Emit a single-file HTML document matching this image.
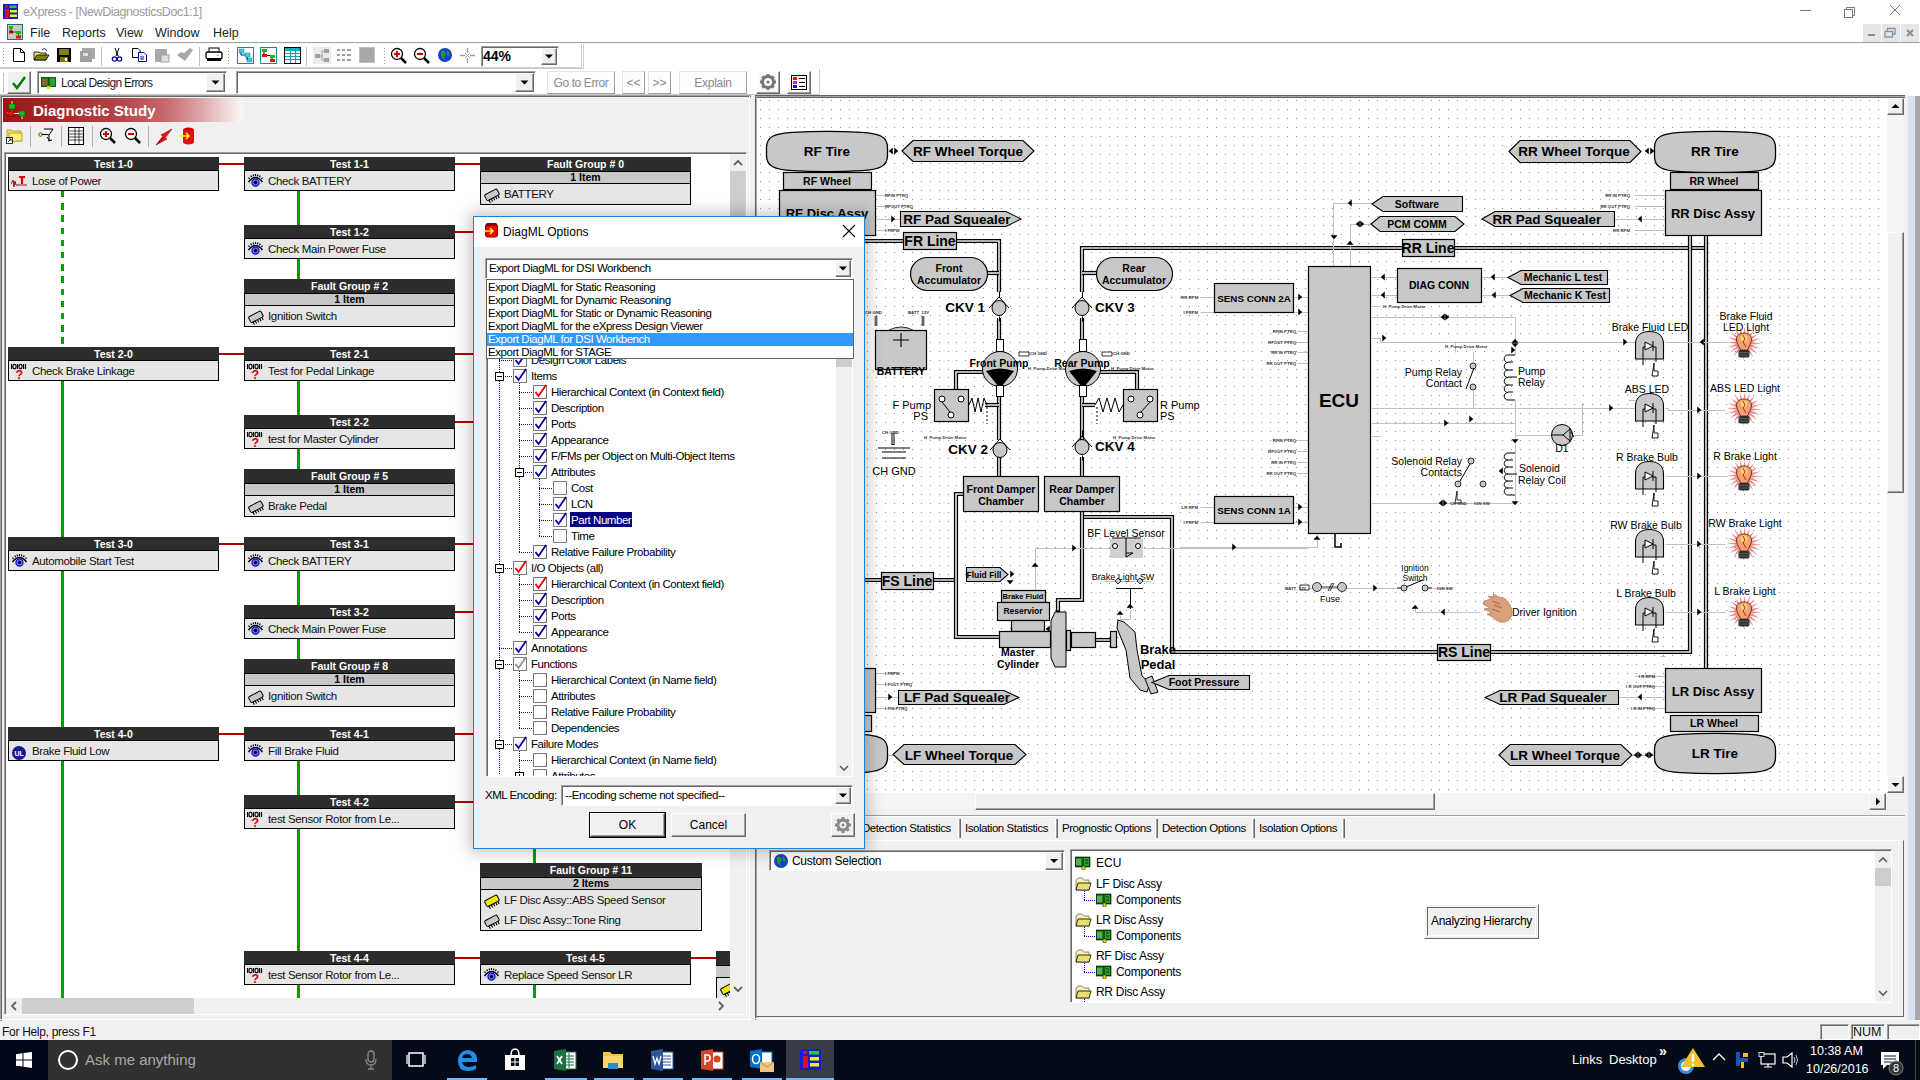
<!DOCTYPE html>
<html><head><meta charset="utf-8"><style>
html,body{margin:0;padding:0;width:1920px;height:1080px;overflow:hidden;background:#f0f0f0;font-family:"Liberation Sans", sans-serif;}
.t{position:absolute;white-space:nowrap;line-height:1;font-family:"Liberation Sans", sans-serif;}
svg text{font-family:"Liberation Sans", sans-serif;}
</style></head><body>
<div style="position:absolute;left:0px;top:0px;width:1920px;height:96px;background:#fff;"></div><svg style="position:absolute;left:3px;top:4px;" width="15" height="15" viewBox="0 0 15 15"><rect x="0" y="0" width="15" height="15" fill="#1a1ad0"/><rect x="2" y="1.5" width="3" height="2" fill="#e01010"/><rect x="6.5" y="1.5" width="7" height="2.5" fill="#20d020"/><rect x="2" y="5" width="4" height="9" fill="#e01010"/><rect x="7" y="6" width="7" height="2.5" fill="#f0f020"/><rect x="7" y="10.5" width="7" height="2.5" fill="#f0f020"/></svg><div class="t" style="left:23px;top:6px;font-size:12.5px;color:#9a9a9a;font-weight:normal;letter-spacing:-0.45px">eXpress - [NewDiagnosticsDoc1:1]</div><svg style="position:absolute;left:1790px;top:0px;" width="130" height="24" viewBox="0 0 130 24"><line x1="10" y1="10.5" x2="21" y2="10.5" stroke="#777"/><rect x="54.5" y="9.5" width="8" height="8" fill="none" stroke="#777"/><path d="M56.5 9.5 V7.5 H64.5 V15.5 H62.5" fill="none" stroke="#777"/><path d="M100 5 L110 15 M110 5 L100 15" stroke="#777"/></svg><svg style="position:absolute;left:7px;top:24px;" width="16" height="16" viewBox="0 0 16 16"><rect x="0.5" y="0.5" width="15" height="15" fill="#c8c8c8" stroke="#1a7070"/><rect x="2" y="2" width="4" height="3" fill="#10c010"/><rect x="2" y="6.5" width="4" height="3" fill="#e01010"/><rect x="9" y="7" width="5" height="3" fill="#10c010"/><rect x="9" y="11.5" width="5" height="3" fill="#e01010"/><path d="M4 5 V8 H9 M11.5 10 V11.5" stroke="#000" stroke-width="0.7" fill="none"/></svg><div class="t" style="left:30px;top:27px;font-size:12.5px;color:#222;font-weight:normal;">File</div><div class="t" style="left:62px;top:27px;font-size:12.5px;color:#222;font-weight:normal;">Reports</div><div class="t" style="left:116px;top:27px;font-size:12.5px;color:#222;font-weight:normal;">View</div><div class="t" style="left:155px;top:27px;font-size:12.5px;color:#222;font-weight:normal;">Window</div><div class="t" style="left:213px;top:27px;font-size:12.5px;color:#222;font-weight:normal;">Help</div><div style="position:absolute;left:1863px;top:24px;width:18px;height:18px;background:#e6e6e6;"></div><div style="position:absolute;left:1882px;top:24px;width:18px;height:18px;background:#e6e6e6;"></div><div style="position:absolute;left:1901px;top:24px;width:18px;height:18px;background:#e6e6e6;"></div><svg style="position:absolute;left:1863px;top:24px;" width="57" height="18" viewBox="0 0 57 18"><rect x="5" y="10" width="7" height="2" fill="#7f93a8"/><rect x="22" y="7.5" width="7.5" height="5.5" fill="none" stroke="#7f93a8" stroke-width="1.3"/><path d="M24.5 7 V4.5 H32 V10 H30" fill="none" stroke="#7f93a8" stroke-width="1.3"/><path d="M44 6 L50 12 M50 6 L44 12" stroke="#7f93a8" stroke-width="2"/></svg><div style="position:absolute;left:0px;top:42px;width:1920px;height:2px;background:#a0a0a0;border-bottom:0"></div><div style="position:absolute;left:0px;top:43px;width:1920px;height:1px;background:#f8f8f8;"></div><div style="position:absolute;left:0px;top:67px;width:582px;height:1px;background:#d0d0d0;"></div><div style="position:absolute;left:581px;top:44px;width:1px;height:24px;background:#d0d0d0;"></div><div style="position:absolute;left:0px;top:94px;width:820px;height:1px;background:#c8c8c8;"></div><div style="position:absolute;left:819px;top:69px;width:1px;height:26px;background:#d0d0d0;"></div><div style="position:absolute;left:0px;top:68px;width:584px;height:1px;background:#c8c8c8;"></div><div style="position:absolute;left:583px;top:44px;width:1px;height:25px;background:#d0d0d0;"></div><div style="position:absolute;left:3px;top:48px;width:1px;height:1px;background:#a0a0a0;"></div><div style="position:absolute;left:3px;top:51px;width:1px;height:1px;background:#a0a0a0;"></div><div style="position:absolute;left:3px;top:54px;width:1px;height:1px;background:#a0a0a0;"></div><div style="position:absolute;left:3px;top:57px;width:1px;height:1px;background:#a0a0a0;"></div><div style="position:absolute;left:3px;top:60px;width:1px;height:1px;background:#a0a0a0;"></div><div style="position:absolute;left:3px;top:63px;width:1px;height:1px;background:#a0a0a0;"></div><div style="position:absolute;left:3px;top:73px;width:1px;height:20px;background:#c0c0c0;"></div><svg style="position:absolute;left:12px;top:47px;" width="14" height="16" viewBox="0 0 14 16"><path d="M1.5 1.5 H8.5 L12.5 5.5 V14.5 H1.5 Z" fill="#fff" stroke="#000"/><path d="M8.5 1.5 V5.5 H12.5" fill="none" stroke="#000"/></svg><svg style="position:absolute;left:33px;top:47px;" width="17" height="16" viewBox="0 0 17 16"><path d="M1 5 H6 L7 6 H13 V13 H1 Z" fill="#e0e070" stroke="#000" stroke-width="0.8"/><path d="M1 13 L4 8 H16 L13 13 Z" fill="#808000" stroke="#000" stroke-width="0.8"/><path d="M9 3 Q12 0 14 4" fill="none" stroke="#000" stroke-width="0.8"/></svg><svg style="position:absolute;left:56px;top:47px;" width="16" height="16" viewBox="0 0 16 16"><rect x="1" y="1" width="14" height="14" fill="#000"/><rect x="3" y="2" width="10" height="6" fill="#808000"/><rect x="4" y="10" width="8" height="5" fill="#808000"/><rect x="9" y="11" width="2" height="3" fill="#fff"/></svg><svg style="position:absolute;left:79px;top:47px;" width="17" height="16" viewBox="0 0 17 16"><rect x="3" y="1" width="13" height="11" fill="#a8a8a8"/><rect x="1" y="4" width="12" height="11" fill="#a0a0a0"/><rect x="4" y="6" width="5" height="3" fill="#e0e0e0"/></svg><div style="position:absolute;left:101px;top:47px;width:1px;height:19px;background:#c0c0c0;"></div><svg style="position:absolute;left:111px;top:47px;" width="12" height="16" viewBox="0 0 12 16"><path d="M4 1 L7 9 M8 1 L5 9" stroke="#000" stroke-width="1"/><circle cx="3.5" cy="12" r="2.2" fill="none" stroke="#00008b" stroke-width="1.2"/><circle cx="8.5" cy="12" r="2.2" fill="none" stroke="#00008b" stroke-width="1.2"/></svg><svg style="position:absolute;left:131px;top:47px;" width="17" height="15" viewBox="0 0 17 15"><path d="M1.5 1.5 H7 L9 3.5 V10.5 H1.5 Z" fill="#fff" stroke="#000"/><path d="M7.5 5.5 H13 L15.5 8 V14.5 H7.5 Z" fill="#fff" stroke="#00008b"/><path d="M9 10 H13 M9 12 H13" stroke="#00008b"/></svg><svg style="position:absolute;left:154px;top:47px;" width="16" height="16" viewBox="0 0 16 16"><rect x="1" y="2" width="12" height="13" rx="1" fill="#a8a8a8"/><rect x="7" y="8" width="8" height="7" fill="#e0e0e0" stroke="#a0a0a0"/></svg><svg style="position:absolute;left:176px;top:47px;" width="18" height="16" viewBox="0 0 18 16"><path d="M1 8 L9 14 L17 3 L14 1 L8 6 L5 5 Z" fill="#a8a8a8"/></svg><div style="position:absolute;left:199px;top:47px;width:1px;height:19px;background:#c0c0c0;"></div><svg style="position:absolute;left:205px;top:47px;" width="18" height="15" viewBox="0 0 18 15"><rect x="4" y="1" width="10" height="5" fill="#fff" stroke="#000"/><rect x="1" y="5" width="16" height="7" rx="2" fill="#fff" stroke="#000" stroke-width="1.3"/><rect x="2" y="11" width="14" height="3" fill="#000"/><rect x="11" y="8" width="3" height="1" fill="#dd0"/></svg><div style="position:absolute;left:228px;top:48px;width:1px;height:1px;background:#a0a0a0;"></div><div style="position:absolute;left:228px;top:51px;width:1px;height:1px;background:#a0a0a0;"></div><div style="position:absolute;left:228px;top:54px;width:1px;height:1px;background:#a0a0a0;"></div><div style="position:absolute;left:228px;top:57px;width:1px;height:1px;background:#a0a0a0;"></div><div style="position:absolute;left:228px;top:60px;width:1px;height:1px;background:#a0a0a0;"></div><div style="position:absolute;left:228px;top:63px;width:1px;height:1px;background:#a0a0a0;"></div><svg style="position:absolute;left:237px;top:47px;" width="18" height="17" viewBox="0 0 18 17"><rect x="0.5" y="0.5" width="16" height="16" fill="#fff" stroke="#188a8a"/><rect x="2" y="2" width="5" height="4" fill="#30d0f0" stroke="#188a8a" stroke-width="0.5"/><rect x="8" y="6" width="5" height="4" fill="#30d0f0" stroke="#188a8a" stroke-width="0.5"/><rect x="10" y="11" width="5" height="4" fill="#30d0f0" stroke="#188a8a" stroke-width="0.5"/><path d="M4 6 V8 H8 M10 10 V13 H10" stroke="#00a" fill="none"/></svg><svg style="position:absolute;left:260px;top:47px;" width="18" height="17" viewBox="0 0 18 17"><rect x="0.5" y="0.5" width="16" height="16" fill="#fff" stroke="#188a8a"/><rect x="2" y="2" width="5" height="3" fill="#10c010"/><rect x="2" y="7" width="5" height="3" fill="#e01010"/><rect x="10" y="8" width="5" height="3" fill="#10c010"/><rect x="10" y="12" width="5" height="3" fill="#e01010"/><path d="M4 5 V7 M7 8.5 H10 M12 11 V12" stroke="#000" fill="none"/></svg><svg style="position:absolute;left:284px;top:47px;" width="17" height="17" viewBox="0 0 17 17"><rect x="0.5" y="0.5" width="16" height="16" fill="#fff" stroke="#000"/><rect x="1" y="1" width="15" height="3" fill="#10b0c0"/><path d="M1 6.5 H16 M1 9.5 H16 M1 12.5 H16 M6.5 1 V16 M11.5 1 V16" stroke="#10a0b0"/></svg><div style="position:absolute;left:306px;top:47px;width:1px;height:19px;background:#c0c0c0;"></div><svg style="position:absolute;left:313px;top:47px;" width="18" height="17" viewBox="0 0 18 17"><rect x="0" y="0" width="18" height="17" fill="#eaeaea"/><rect x="2" y="7" width="5" height="4" fill="#a0a0a0"/><rect x="11" y="2" width="5" height="4" fill="#a0a0a0"/><rect x="11" y="11" width="5" height="4" fill="#a0a0a0"/><path d="M7 9 H9 V4 H11 M9 9 V13 H11" stroke="#a0a0a0" fill="none"/></svg><svg style="position:absolute;left:336px;top:47px;" width="17" height="17" viewBox="0 0 17 17"><path d="M1 3 h3 M6 3 h3 M11 3 h4 M1 8 h3 M6 8 h3 M11 8 h4 M1 13 h3 M6 13 h3 M11 13 h4" stroke="#a0a0a0" stroke-width="2"/></svg><svg style="position:absolute;left:359px;top:47px;" width="16" height="17" viewBox="0 0 16 17"><rect x="0.5" y="0.5" width="15" height="15" fill="#a8a8a8" stroke="#c0c0c0"/></svg><div style="position:absolute;left:384px;top:48px;width:1px;height:1px;background:#a0a0a0;"></div><div style="position:absolute;left:384px;top:51px;width:1px;height:1px;background:#a0a0a0;"></div><div style="position:absolute;left:384px;top:54px;width:1px;height:1px;background:#a0a0a0;"></div><div style="position:absolute;left:384px;top:57px;width:1px;height:1px;background:#a0a0a0;"></div><div style="position:absolute;left:384px;top:60px;width:1px;height:1px;background:#a0a0a0;"></div><div style="position:absolute;left:384px;top:63px;width:1px;height:1px;background:#a0a0a0;"></div><svg style="position:absolute;left:390px;top:47px;" width="18" height="18" viewBox="0 0 18 18"><circle cx="7" cy="7" r="5.5" fill="#fff" stroke="#000" stroke-width="1.3"/><path d="M4 7 h6 M7 4 v6" stroke="#c00" stroke-width="2"/><path d="M11 11 L16 16" stroke="#000" stroke-width="2.5"/></svg><svg style="position:absolute;left:413px;top:47px;" width="18" height="18" viewBox="0 0 18 18"><circle cx="7" cy="7" r="5.5" fill="#fff" stroke="#000" stroke-width="1.3"/><path d="M4 7 h6" stroke="#c00" stroke-width="2"/><path d="M11 11 L16 16" stroke="#000" stroke-width="2.5"/></svg><svg style="position:absolute;left:437px;top:47px;" width="16" height="16" viewBox="0 0 16 16"><circle cx="8" cy="8" r="7" fill="#1a3fd0"/><path d="M4 4 Q8 3 9 7 Q6 9 8 13 Q5 12 4 8 Z M10 3 Q13 5 12 9 L10 8 Z" fill="#20a020"/></svg><svg style="position:absolute;left:459px;top:47px;" width="17" height="17" viewBox="0 0 17 17"><path d="M8.5 1 V6 M8.5 11 V16 M1 8.5 H6 M11 8.5 H16" stroke="#a0a0a0" stroke-width="1.3"/><path d="M6 6 L8.5 8.5 L11 6 M6 11 L8.5 8.5 L11 11" stroke="#a0a0a0" fill="none"/></svg><div style="position:absolute;left:481px;top:46px;width:78px;height:21px;background:#fff;box-sizing:border-box;border-top:1px solid #a0a0a0;border-left:1px solid #a0a0a0;border-right:1px solid #fff;border-bottom:1px solid #fff;box-shadow:inset 1px 1px 0 #696969;"></div><div class="t" style="left:483px;top:49px;font-size:14px;color:#000;font-weight:bold;">44%</div><div style="position:absolute;left:541px;top:48px;width:16px;height:17px;background:#f0f0f0;box-sizing:border-box;border-top:1px solid #fff;border-left:1px solid #fff;border-right:1px solid #696969;border-bottom:1px solid #696969;box-shadow:inset -1px -1px 0 #a0a0a0;"></div><svg style="position:absolute;left:541px;top:48px;" width="16" height="17" viewBox="0 0 16 17"><path d="M4.0 6.5 h8 l-4 4 z" fill="#000"/></svg><div style="position:absolute;left:7px;top:71px;width:24px;height:23px;background:#f0f0f0;box-sizing:border-box;border-top:1px solid #fff;border-left:1px solid #fff;border-right:1px solid #696969;border-bottom:1px solid #696969;box-shadow:inset -1px -1px 0 #a0a0a0;"></div><svg style="position:absolute;left:11px;top:75px;" width="16" height="15" viewBox="0 0 16 15"><path d="M2 8 L6 13 L14 2" fill="none" stroke="#008000" stroke-width="2.5"/></svg><div style="position:absolute;left:37px;top:71px;width:190px;height:23px;background:#fff;box-sizing:border-box;border-top:1px solid #a0a0a0;border-left:1px solid #a0a0a0;border-right:1px solid #fff;border-bottom:1px solid #fff;box-shadow:inset 1px 1px 0 #696969;"></div><svg style="position:absolute;left:41px;top:76px;" width="15" height="13" viewBox="0 0 15 13"><rect x="0" y="1" width="15" height="10" fill="#106010"/><rect x="1" y="2" width="6" height="8" fill="#208020"/><path d="M1 4 h5 M1 6 h5 M1 8 h5" stroke="#f44"/><rect x="9" y="2" width="5" height="8" fill="#30a030"/><rect x="6" y="10" width="3" height="3" fill="#dd0"/></svg><div class="t" style="left:61px;top:77px;font-size:12px;color:#1a1a3a;font-weight:normal;letter-spacing:-0.75px">Local Design Errors</div><div style="position:absolute;left:206px;top:73px;width:19px;height:19px;background:#f0f0f0;box-sizing:border-box;border-top:1px solid #fff;border-left:1px solid #fff;border-right:1px solid #696969;border-bottom:1px solid #696969;box-shadow:inset -1px -1px 0 #a0a0a0;"></div><svg style="position:absolute;left:206px;top:73px;" width="19" height="19" viewBox="0 0 19 19"><path d="M5.5 7.5 h8 l-4 4 z" fill="#000"/></svg><div style="position:absolute;left:236px;top:71px;width:300px;height:23px;background:#fff;box-sizing:border-box;border-top:1px solid #a0a0a0;border-left:1px solid #a0a0a0;border-right:1px solid #fff;border-bottom:1px solid #fff;box-shadow:inset 1px 1px 0 #696969;"></div><div style="position:absolute;left:515px;top:73px;width:19px;height:19px;background:#f0f0f0;box-sizing:border-box;border-top:1px solid #fff;border-left:1px solid #fff;border-right:1px solid #696969;border-bottom:1px solid #696969;box-shadow:inset -1px -1px 0 #a0a0a0;"></div><svg style="position:absolute;left:515px;top:73px;" width="19" height="19" viewBox="0 0 19 19"><path d="M5.5 7.5 h8 l-4 4 z" fill="#000"/></svg><div style="position:absolute;left:547px;top:71px;width:68px;height:23px;background:#fdfdfd;box-sizing:border-box;border-right:1px solid #a0a0a0;border-bottom:1px solid #a0a0a0;border-left:1px solid #e3e3e3;border-top:1px solid #e3e3e3"></div><div class="t" style="left:547px;top:77px;width:68px;text-align:center;font-size:12px;color:#8a8a8a;letter-spacing:-0.4px">Go to Error</div><div style="position:absolute;left:622px;top:71px;width:23px;height:23px;background:#fdfdfd;box-sizing:border-box;border-right:1px solid #a0a0a0;border-bottom:1px solid #a0a0a0;border-left:1px solid #e3e3e3;border-top:1px solid #e3e3e3"></div><div class="t" style="left:622px;top:77px;width:23px;text-align:center;font-size:12px;color:#8a8a8a">&lt;&lt;</div><div style="position:absolute;left:648px;top:71px;width:23px;height:23px;background:#fdfdfd;box-sizing:border-box;border-right:1px solid #a0a0a0;border-bottom:1px solid #a0a0a0;border-left:1px solid #e3e3e3;border-top:1px solid #e3e3e3"></div><div class="t" style="left:648px;top:77px;width:23px;text-align:center;font-size:12px;color:#8a8a8a">&gt;&gt;</div><div style="position:absolute;left:679px;top:71px;width:68px;height:23px;background:#fdfdfd;box-sizing:border-box;border-right:1px solid #a0a0a0;border-bottom:1px solid #a0a0a0;border-left:1px solid #e3e3e3;border-top:1px solid #e3e3e3"></div><div class="t" style="left:679px;top:77px;width:68px;text-align:center;font-size:12px;color:#8a8a8a;letter-spacing:-0.3px">Explain</div><div style="position:absolute;left:756px;top:71px;width:24px;height:23px;background:#fafafa;box-sizing:border-box;border-top:1px solid #fff;border-left:1px solid #fff;border-right:1px solid #696969;border-bottom:1px solid #696969;box-shadow:inset -1px -1px 0 #a0a0a0;"></div><svg style="position:absolute;left:759px;top:73px;" width="18" height="18" viewBox="0 0 18 18"><g transform="translate(9,9)"><circle r="5.5" fill="none" stroke="#777" stroke-width="3"/><circle r="1.6" fill="#777"/><rect x="-1.5" y="-8" width="3" height="3.5" fill="#777" transform="rotate(0)"/><rect x="-1.5" y="-8" width="3" height="3.5" fill="#777" transform="rotate(45)"/><rect x="-1.5" y="-8" width="3" height="3.5" fill="#777" transform="rotate(90)"/><rect x="-1.5" y="-8" width="3" height="3.5" fill="#777" transform="rotate(135)"/><rect x="-1.5" y="-8" width="3" height="3.5" fill="#777" transform="rotate(180)"/><rect x="-1.5" y="-8" width="3" height="3.5" fill="#777" transform="rotate(225)"/><rect x="-1.5" y="-8" width="3" height="3.5" fill="#777" transform="rotate(270)"/><rect x="-1.5" y="-8" width="3" height="3.5" fill="#777" transform="rotate(315)"/></g></svg><div style="position:absolute;left:787px;top:71px;width:24px;height:23px;background:#fafafa;box-sizing:border-box;border-top:1px solid #fff;border-left:1px solid #fff;border-right:1px solid #696969;border-bottom:1px solid #696969;box-shadow:inset -1px -1px 0 #a0a0a0;"></div><svg style="position:absolute;left:791px;top:75px;" width="16" height="15" viewBox="0 0 16 15"><rect x="0.5" y="0.5" width="15" height="14" fill="#fff" stroke="#000"/><rect x="2" y="2" width="4" height="3" fill="#f00"/><rect x="2" y="6" width="4" height="3" fill="#f0f"/><rect x="2" y="10" width="4" height="3" fill="#00f"/><path d="M8 3.5 h6 M8 7.5 h6 M8 11.5 h6" stroke="#000"/></svg><div style="position:absolute;left:0px;top:1020px;width:1920px;height:20px;background:#f0f0f0;"></div><div class="t" style="left:2px;top:1026px;font-size:12px;color:#111;font-weight:normal;letter-spacing:-0.3px">For Help, press F1</div><div style="position:absolute;left:1820px;top:1024px;width:29px;height:16px;background:#f0f0f0;box-sizing:border-box;border-top:1px solid #a0a0a0;border-left:1px solid #a0a0a0;border-right:1px solid #fff;border-bottom:1px solid #fff;box-shadow:inset 1px 1px 0 #696969;"></div><div style="position:absolute;left:1851px;top:1024px;width:34px;height:16px;background:#f0f0f0;box-sizing:border-box;border-top:1px solid #a0a0a0;border-left:1px solid #a0a0a0;border-right:1px solid #fff;border-bottom:1px solid #fff;box-shadow:inset 1px 1px 0 #696969;"></div><div class="t" style="left:1853px;top:1026px;font-size:12.5px;color:#111;font-weight:normal;">NUM</div><div style="position:absolute;left:1887px;top:1024px;width:33px;height:16px;background:#f0f0f0;box-sizing:border-box;border-top:1px solid #a0a0a0;border-left:1px solid #a0a0a0;border-right:1px solid #fff;border-bottom:1px solid #fff;box-shadow:inset 1px 1px 0 #696969;"></div><div style="position:absolute;left:0px;top:1040px;width:1920px;height:40px;background:#050a18;"></div><div style="position:absolute;left:0px;top:1040px;width:48px;height:40px;background:#000718;"></div><svg style="position:absolute;left:16px;top:1052px;" width="16" height="16" viewBox="0 0 16 16"><path d="M0 2.2 L6.5 1.3 V7.4 H0 Z M7.5 1.1 L16 0 V7.4 H7.5 Z M0 8.4 H6.5 V14.6 L0 13.8 Z M7.5 8.4 H16 V16 L7.5 14.8 Z" fill="#fff"/></svg><div style="position:absolute;left:48px;top:1040px;width:344px;height:40px;background:#313131;"></div><svg style="position:absolute;left:57px;top:1049px;" width="22" height="22" viewBox="0 0 22 22"><circle cx="11" cy="11" r="9" fill="none" stroke="#fff" stroke-width="2"/></svg><div class="t" style="left:85px;top:1052px;font-size:15px;color:#a8a8a8;font-weight:normal;">Ask me anything</div><svg style="position:absolute;left:364px;top:1050px;" width="14" height="20" viewBox="0 0 14 20"><rect x="4" y="1" width="6" height="11" rx="3" fill="none" stroke="#888" stroke-width="1.3"/><path d="M2 9 Q2 15 7 15 Q12 15 12 9 M7 15 V19 M4 19 H10" fill="none" stroke="#888" stroke-width="1.3"/></svg><svg style="position:absolute;left:405px;top:1051px;" width="22" height="17" viewBox="0 0 22 17"><rect x="4" y="2" width="14" height="13" fill="none" stroke="#fff" stroke-width="1.5"/><path d="M2 4 V13 M20 4 V13" stroke="#fff" stroke-width="1.3"/></svg><svg style="position:absolute;left:456px;top:1048px;" width="23" height="24" viewBox="0 0 23 24"><path d="M21 14 H6 Q7 19 13 19 Q17 19 20 17 V21 Q17 23 12 23 Q2 23 2 13 Q2 3 12 2 Q22 3 21 14 Z M6 10 H16 Q15 6 11 6 Q7 6 6 10 Z" fill="#1f8ee8"/></svg><svg style="position:absolute;left:504px;top:1048px;" width="22" height="24" viewBox="0 0 22 24"><path d="M1 7 H21 V22 H1 Z" fill="#fff"/><path d="M7 7 Q7 1 11 1 Q15 1 15 7" fill="none" stroke="#fff" stroke-width="1.5"/><rect x="7" y="10" width="3.5" height="3.5" fill="#0a0f1e"/><rect x="11.5" y="10" width="3.5" height="3.5" fill="#0a0f1e"/><rect x="7" y="14.5" width="3.5" height="3.5" fill="#0a0f1e"/><rect x="11.5" y="14.5" width="3.5" height="3.5" fill="#0a0f1e"/></svg><svg style="position:absolute;left:553px;top:1048px;" width="24" height="24" viewBox="0 0 24 24"><rect x="9" y="4" width="14" height="17" fill="#fff" stroke="#1d6f42"/><path d="M12 8 h9 M12 11 h9 M12 14 h9 M12 17 h9 M16 5 V20" stroke="#1d6f42"/><path d="M1 3 L13 1 V23 L1 21 Z" fill="#1d6f42"/><path d="M4 8 L9 16 M9 8 L4 16" stroke="#fff" stroke-width="1.8"/></svg><svg style="position:absolute;left:602px;top:1049px;" width="22" height="22" viewBox="0 0 22 22"><path d="M1 3 H8 L10 5 H21 V19 H1 Z" fill="#f4c542"/><rect x="1" y="7" width="20" height="12" fill="#f8d66a"/><rect x="6" y="14" width="10" height="6" fill="#2a8ad8"/></svg><svg style="position:absolute;left:650px;top:1048px;" width="24" height="24" viewBox="0 0 24 24"><rect x="9" y="4" width="14" height="17" fill="#fff" stroke="#2b579a"/><path d="M12 8 h9 M12 11 h9 M12 14 h9 M12 17 h9" stroke="#2b579a"/><path d="M1 3 L13 1 V23 L1 21 Z" fill="#2b579a"/><path d="M3 8 L5 16 L7 10 L9 16 L11 8" stroke="#fff" stroke-width="1.3" fill="none"/></svg><svg style="position:absolute;left:700px;top:1048px;" width="24" height="24" viewBox="0 0 24 24"><rect x="9" y="4" width="14" height="17" fill="#fff" stroke="#d24726"/><circle cx="17" cy="11" r="3.5" fill="#d24726"/><path d="M1 3 L13 1 V23 L1 21 Z" fill="#d24726"/><path d="M5 17 V7 H8 Q10 7 10 10 Q10 13 8 13 H5" stroke="#fff" stroke-width="1.5" fill="none"/></svg><svg style="position:absolute;left:749px;top:1048px;" width="26" height="26" viewBox="0 0 26 26"><rect x="9" y="4" width="14" height="14" fill="#fff" stroke="#0072c6"/><path d="M1 3 L13 1 V21 L1 19 Z" fill="#0072c6"/><ellipse cx="7" cy="11" rx="3.5" ry="4.5" fill="none" stroke="#fff" stroke-width="1.5"/><rect x="11" y="14" width="14" height="10" fill="#f1c684"/><path d="M11 14 L18 19 L25 14" stroke="#c08a40" fill="none"/></svg><div style="position:absolute;left:786px;top:1040px;width:48px;height:40px;background:#383d48;"></div><svg style="position:absolute;left:800px;top:1049px;" width="21" height="21" viewBox="0 0 21 21"><rect x="0" y="0" width="21" height="21" fill="#1a1ad0"/><rect x="3" y="2" width="4" height="3" fill="#e01010"/><rect x="9" y="2" width="10" height="3.5" fill="#20d020"/><rect x="3" y="7" width="5" height="12" fill="#e01010"/><rect x="10" y="8" width="9" height="3.5" fill="#f0f020"/><rect x="10" y="14" width="9" height="3.5" fill="#f0f020"/></svg><div style="position:absolute;left:447px;top:1078px;width:40px;height:2px;background:#76b9ed;"></div><div style="position:absolute;left:545px;top:1078px;width:42px;height:2px;background:#76b9ed;"></div><div style="position:absolute;left:594px;top:1078px;width:40px;height:2px;background:#76b9ed;"></div><div style="position:absolute;left:643px;top:1078px;width:40px;height:2px;background:#76b9ed;"></div><div style="position:absolute;left:692px;top:1078px;width:40px;height:2px;background:#76b9ed;"></div><div style="position:absolute;left:742px;top:1078px;width:40px;height:2px;background:#76b9ed;"></div><div style="position:absolute;left:786px;top:1078px;width:48px;height:2px;background:#76b9ed;"></div><div class="t" style="left:1572px;top:1053px;font-size:13px;color:#fff;font-weight:normal;">Links</div><div class="t" style="left:1609px;top:1053px;font-size:13px;color:#fff;font-weight:normal;">Desktop</div><div class="t" style="left:1659px;top:1044px;font-size:14px;color:#fff;font-weight:bold;">&#187;</div><svg style="position:absolute;left:1676px;top:1045px;" width="32" height="30" viewBox="0 0 32 30"><circle cx="10" cy="21" r="8" fill="#3a8ee0"/><circle cx="10" cy="21" r="5" fill="#fff"/><path d="M17 3 L29 22 H5 Z" fill="#f4c030"/><rect x="15.8" y="9" width="2.4" height="8" fill="#fff"/><rect x="15.8" y="18.5" width="2.4" height="2.4" fill="#fff"/></svg><svg style="position:absolute;left:1712px;top:1052px;" width="14" height="10" viewBox="0 0 14 10"><path d="M1 8 L7 2 L13 8" stroke="#fff" stroke-width="1.4" fill="none"/></svg><svg style="position:absolute;left:1735px;top:1052px;" width="16" height="16" viewBox="0 0 16 16"><rect x="1" y="0" width="4" height="14" fill="#2050b0"/><rect x="5" y="6" width="8" height="4" fill="#2050b0"/><rect x="8" y="1" width="5" height="4" fill="#f0c020"/><rect x="6" y="10" width="3" height="6" fill="#f0c020"/></svg><svg style="position:absolute;left:1758px;top:1052px;" width="18" height="16" viewBox="0 0 18 16"><rect x="3" y="2" width="14" height="10" fill="none" stroke="#fff" stroke-width="1.2"/><path d="M10 12 V15 M6 15 H14" stroke="#fff" stroke-width="1.2"/><rect x="1" y="0.5" width="5" height="4" fill="#0a0f1e" stroke="#fff" stroke-width="0.8"/></svg><svg style="position:absolute;left:1782px;top:1051px;" width="18" height="18" viewBox="0 0 18 18"><path d="M1 6 H5 L10 2 V16 L5 12 H1 Z" fill="none" stroke="#fff" stroke-width="1.2"/><path d="M12 6 Q14 9 12 12 M14 4 Q17 9 14 14" stroke="#ccc" fill="none"/></svg><div class="t" style="left:1810px;top:1045px;font-size:12.5px;color:#fff;font-weight:normal;">10:38 AM</div><div class="t" style="left:1806px;top:1063px;font-size:12.5px;color:#fff;font-weight:normal;">10/26/2016</div><svg style="position:absolute;left:1878px;top:1050px;" width="28" height="26" viewBox="0 0 28 26"><path d="M3 2 H21 V15 H9 L5 19 V15 H3 Z" fill="#fff"/><path d="M6 6 h12 M6 9 h12 M6 12 h8" stroke="#0a0f1e"/><circle cx="18" cy="18" r="7" fill="#333" stroke="#888"/><text x="18" y="22" font-size="11" fill="#fff" text-anchor="middle">8</text></svg><div style="position:absolute;left:1915px;top:1040px;width:1px;height:40px;background:#444;"></div><div style="position:absolute;left:1908px;top:96px;width:7px;height:924px;background:#d6e3f2;"></div><div style="position:absolute;left:1915px;top:96px;width:5px;height:924px;background:#a9a9a9;"></div><div style="position:absolute;left:0px;top:95px;width:751px;height:926px;background:#f0f0f0;"></div><div style="position:absolute;left:0px;top:95px;width:751px;height:1px;background:#a0a0a0;"></div><div style="position:absolute;left:0px;top:96px;width:751px;height:1px;background:#696969;"></div><div style="position:absolute;left:0px;top:95px;width:1px;height:926px;background:#a0a0a0;"></div><div style="position:absolute;left:1px;top:96px;width:1px;height:925px;background:#696969;"></div><div style="position:absolute;left:749px;top:96px;width:1px;height:924px;background:#fff;"></div><div style="position:absolute;left:0px;top:1019px;width:751px;height:1px;background:#fff;"></div><div style="position:absolute;left:3px;top:98px;width:240px;height:24px;background:linear-gradient(90deg,#a01418 0%,#a82428 22%,#b6464a 50%,#c66668 67%,#dca4a6 82%,#f0dada 93%,#fbf6f6 100%)"></div><svg style="position:absolute;left:6px;top:101px;" width="20" height="18" viewBox="0 0 20 18"><path d="M6 0 V3 M6 9 V12 M1 12 H6 M13 12 H12 M16 15 V18" stroke="#fff" stroke-width="0.9"/><rect x="3" y="3" width="6" height="5" fill="#10c010" stroke="#006000" stroke-width="0.6"/><rect x="2" y="10" width="6" height="5" fill="#f01010" stroke="#600000" stroke-width="0.6"/><rect x="13" y="10" width="6" height="5" fill="#10c010" stroke="#006000" stroke-width="0.6"/><path d="M8 12.5 H13" stroke="#fff" stroke-width="0.9"/></svg><div class="t" style="left:33px;top:103px;font-size:15px;color:#fff;font-weight:bold;">Diagnostic Study</div><svg style="position:absolute;left:6px;top:127px;" width="17" height="17" viewBox="0 0 17 17"><path d="M1 3 H6 L7 4 H15 V14 H1 Z" fill="#f0e060" stroke="#a09000" stroke-width="0.7"/><rect x="3" y="6" width="13" height="8" fill="#f8f080" stroke="#a09000" stroke-width="0.7"/><rect x="0.5" y="10.5" width="6" height="6" fill="#fff" stroke="#000" stroke-width="0.8"/><path d="M2 15 L5 12 M3 12 H5 V14" stroke="#000" stroke-width="0.8" fill="none"/></svg><div style="position:absolute;left:30px;top:126px;width:1px;height:21px;background:#b0b0b0;"></div><svg style="position:absolute;left:38px;top:127px;" width="16" height="16" viewBox="0 0 16 16"><path d="M6 2 H15 L11 8" fill="none" stroke="#000"/><path d="M11 8 V13" stroke="#000"/><circle cx="2.5" cy="7.5" r="1.8" fill="#ff0" stroke="#000" stroke-width="0.6"/><path d="M4 7.5 H9 L11 8 M9 10 L12 14 M10 14 L14 13" stroke="#000" fill="none"/></svg><div style="position:absolute;left:61px;top:126px;width:1px;height:21px;background:#b0b0b0;"></div><svg style="position:absolute;left:68px;top:127px;" width="17" height="18" viewBox="0 0 17 18"><rect x="0.5" y="0.5" width="15" height="17" fill="#fff" stroke="#000"/><path d="M1 4 H15 M1 7 H15 M1 10 H15 M1 13 H15 M7 1 V17 M11 1 V17" stroke="#000" stroke-width="0.7"/></svg><div style="position:absolute;left:92px;top:126px;width:1px;height:21px;background:#b0b0b0;"></div><svg style="position:absolute;left:99px;top:127px;" width="18" height="18" viewBox="0 0 18 18"><circle cx="7" cy="7" r="5.5" fill="#fff" stroke="#000" stroke-width="1.3"/><path d="M4 7 h6 M7 4 v6" stroke="#c00" stroke-width="2"/><path d="M11 11 L16 16" stroke="#000" stroke-width="2.5"/></svg><svg style="position:absolute;left:124px;top:127px;" width="18" height="18" viewBox="0 0 18 18"><circle cx="7" cy="7" r="5.5" fill="#fff" stroke="#000" stroke-width="1.3"/><path d="M4 7 h6" stroke="#c00" stroke-width="2"/><path d="M11 11 L16 16" stroke="#000" stroke-width="2.5"/></svg><div style="position:absolute;left:148px;top:126px;width:1px;height:21px;background:#b0b0b0;"></div><svg style="position:absolute;left:155px;top:128px;" width="18" height="18" viewBox="0 0 18 18"><path d="M1 17 L8 8 L6 7 L17 1 L10 10 L12 11 Z" fill="#f01010" stroke="#900" stroke-width="0.6"/><path d="M3 15 L9 9" stroke="#600" stroke-width="0.8"/></svg><svg style="position:absolute;left:179px;top:127px;" width="17" height="18" viewBox="0 0 17 18"><ellipse cx="9.5" cy="3" rx="5.5" ry="2.5" fill="#c00"/><rect x="4" y="3" width="11" height="12" fill="#e01010"/><ellipse cx="9.5" cy="15" rx="5.5" ry="2.5" fill="#e01010"/><path d="M0 9 H10 M7 6 L10 9 L7 12" stroke="#ff0" stroke-width="1.5" fill="none"/></svg><div style="position:absolute;left:4px;top:152px;width:743px;height:863px;background:#fff;box-sizing:border-box;border-top:1px solid #a0a0a0;border-left:1px solid #a0a0a0;border-right:1px solid #fff;border-bottom:1px solid #fff"></div><div style="position:absolute;left:5px;top:153px;width:741px;height:1px;background:#696969;"></div><div style="position:absolute;left:5px;top:153px;width:1px;height:861px;background:#696969;"></div><div style="position:absolute;left:61px;top:191px;width:2.5px;height:156px;background:repeating-linear-gradient(180deg,#00a000 0 6.5px,transparent 6.5px 12.2px)"></div><div style="position:absolute;left:61px;top:380px;width:2.5px;height:157px;background:#00a000;"></div><div style="position:absolute;left:61px;top:570px;width:2.5px;height:157px;background:#00a000;"></div><div style="position:absolute;left:61px;top:760px;width:2.5px;height:238px;background:#00a000;"></div><div style="position:absolute;left:297px;top:190px;width:2.5px;height:35px;background:#00a000;"></div><div style="position:absolute;left:297px;top:258px;width:2.5px;height:21px;background:#00a000;"></div><div style="position:absolute;left:297px;top:380px;width:2.5px;height:35px;background:#00a000;"></div><div style="position:absolute;left:297px;top:448px;width:2.5px;height:21px;background:#00a000;"></div><div style="position:absolute;left:297px;top:570px;width:2.5px;height:35px;background:#00a000;"></div><div style="position:absolute;left:297px;top:638px;width:2.5px;height:21px;background:#00a000;"></div><div style="position:absolute;left:297px;top:760px;width:2.5px;height:35px;background:#00a000;"></div><div style="position:absolute;left:297px;top:828px;width:2.5px;height:123px;background:#00a000;"></div><div style="position:absolute;left:297px;top:984px;width:2.5px;height:14px;background:#00a000;"></div><div style="position:absolute;left:533px;top:848px;width:2.5px;height:15px;background:#00a000;"></div><div style="position:absolute;left:533px;top:984px;width:2.5px;height:14px;background:#00a000;"></div><div style="position:absolute;left:219px;top:163px;width:25px;height:2px;background:#b00000;"></div><div style="position:absolute;left:219px;top:353px;width:25px;height:2px;background:#b00000;"></div><div style="position:absolute;left:219px;top:543px;width:25px;height:2px;background:#b00000;"></div><div style="position:absolute;left:219px;top:733px;width:25px;height:2px;background:#b00000;"></div><div style="position:absolute;left:455px;top:163px;width:25px;height:2px;background:#b00000;"></div><div style="position:absolute;left:455px;top:231px;width:25px;height:2px;background:#b00000;"></div><div style="position:absolute;left:455px;top:353px;width:25px;height:2px;background:#b00000;"></div><div style="position:absolute;left:455px;top:421px;width:25px;height:2px;background:#b00000;"></div><div style="position:absolute;left:455px;top:543px;width:25px;height:2px;background:#b00000;"></div><div style="position:absolute;left:455px;top:611px;width:25px;height:2px;background:#b00000;"></div><div style="position:absolute;left:455px;top:733px;width:25px;height:2px;background:#b00000;"></div><div style="position:absolute;left:455px;top:801px;width:25px;height:2px;background:#b00000;"></div><div style="position:absolute;left:455px;top:957px;width:25px;height:2px;background:#b00000;"></div><div style="position:absolute;left:690px;top:957px;width:26px;height:2px;background:#b00000;"></div><div style="position:absolute;left:8px;top:157px;width:211px;height:34px;box-sizing:border-box;border:1px solid #000;background:#e6e6e6"></div><div style="position:absolute;left:8px;top:157px;width:211px;height:14px;background:#2d2d2d;"></div><div class="t" style="left:8px;top:159px;width:211px;text-align:center;font-size:10.5px;font-weight:bold;color:#fff">Test 1-0</div><div style="position:absolute;left:8px;top:170px;width:211px;height:1px;background:#000;"></div><svg style="position:absolute;left:11px;top:175px;" width="17" height="14" viewBox="0 0 17 14"><path d="M0 9 L2 5 L3 12 L4 6 L5 10 L7 10 H16" stroke="#8b0000" fill="none" stroke-width="0.9"/><path d="M8 2 H14 M11 2 V9" stroke="#e00000" stroke-width="2.2"/></svg><div class="t" style="left:32px;top:176px;font-size:11.5px;color:#111;font-weight:normal;letter-spacing:-0.35px">Lose of Power</div><div style="position:absolute;left:8px;top:347px;width:211px;height:34px;box-sizing:border-box;border:1px solid #000;background:#e6e6e6"></div><div style="position:absolute;left:8px;top:347px;width:211px;height:14px;background:#2d2d2d;"></div><div class="t" style="left:8px;top:349px;width:211px;text-align:center;font-size:10.5px;font-weight:bold;color:#fff">Test 2-0</div><div style="position:absolute;left:8px;top:360px;width:211px;height:1px;background:#000;"></div><svg style="position:absolute;left:11px;top:362px;" width="17" height="19" viewBox="0 0 17 19"><path d="M0.5 2 V7 M6.5 2 V7 M12.5 2 V7 M14.5 2 V7" stroke="#000" stroke-width="1.2"/><ellipse cx="3.5" cy="4.5" rx="1.6" ry="2.3" fill="none" stroke="#000" stroke-width="1.1"/><ellipse cx="9.5" cy="4.5" rx="1.6" ry="2.3" fill="none" stroke="#000" stroke-width="1.1"/><text x="4.5" y="17" font-size="12.5" font-weight="bold" fill="#e00000">?</text></svg><div class="t" style="left:32px;top:366px;font-size:11.5px;color:#111;font-weight:normal;letter-spacing:-0.35px">Check Brake Linkage</div><div style="position:absolute;left:8px;top:537px;width:211px;height:34px;box-sizing:border-box;border:1px solid #000;background:#e6e6e6"></div><div style="position:absolute;left:8px;top:537px;width:211px;height:14px;background:#2d2d2d;"></div><div class="t" style="left:8px;top:539px;width:211px;text-align:center;font-size:10.5px;font-weight:bold;color:#fff">Test 3-0</div><div style="position:absolute;left:8px;top:550px;width:211px;height:1px;background:#000;"></div><svg style="position:absolute;left:11px;top:553px;" width="17" height="16" viewBox="0 0 17 16"><path d="M1.5 9 Q8.5 0 15.5 9" fill="none" stroke="#000" stroke-width="1.6"/><path d="M1.5 9 Q8.5 15 15.5 9" fill="#fff" stroke="#999" stroke-width="0.8"/><circle cx="8.5" cy="9.5" r="3.6" fill="#7070e0" stroke="#0000ff" stroke-width="1.1"/><circle cx="8.5" cy="9.5" r="1.7" fill="#000"/><path d="M2.5 6 L1.5 4.5 M4.5 4.3 L3.8 2.5 M6.5 3.3 L6.2 1.5 M8.5 3 V1 M10.5 3.3 L10.8 1.5 M12.5 4.3 L13.2 2.5 M14.5 6 L15.5 4.5" stroke="#000" stroke-width="1.2"/></svg><div class="t" style="left:32px;top:556px;font-size:11.5px;color:#111;font-weight:normal;letter-spacing:-0.35px">Automobile Start Test</div><div style="position:absolute;left:8px;top:727px;width:211px;height:34px;box-sizing:border-box;border:1px solid #000;background:#e6e6e6"></div><div style="position:absolute;left:8px;top:727px;width:211px;height:14px;background:#2d2d2d;"></div><div class="t" style="left:8px;top:729px;width:211px;text-align:center;font-size:10.5px;font-weight:bold;color:#fff">Test 4-0</div><div style="position:absolute;left:8px;top:740px;width:211px;height:1px;background:#000;"></div><svg style="position:absolute;left:11px;top:745px;" width="17" height="16" viewBox="0 0 17 16"><circle cx="8" cy="8" r="7" fill="#1a1a90"/><text x="3.5" y="11" font-size="7" font-weight="bold" fill="#fff">UL</text></svg><div class="t" style="left:32px;top:746px;font-size:11.5px;color:#111;font-weight:normal;letter-spacing:-0.35px">Brake Fluid Low</div><div style="position:absolute;left:244px;top:157px;width:211px;height:34px;box-sizing:border-box;border:1px solid #000;background:#e6e6e6"></div><div style="position:absolute;left:244px;top:157px;width:211px;height:14px;background:#2d2d2d;"></div><div class="t" style="left:244px;top:159px;width:211px;text-align:center;font-size:10.5px;font-weight:bold;color:#fff">Test 1-1</div><div style="position:absolute;left:244px;top:170px;width:211px;height:1px;background:#000;"></div><svg style="position:absolute;left:247px;top:173px;" width="17" height="16" viewBox="0 0 17 16"><path d="M1.5 9 Q8.5 0 15.5 9" fill="none" stroke="#000" stroke-width="1.6"/><path d="M1.5 9 Q8.5 15 15.5 9" fill="#fff" stroke="#999" stroke-width="0.8"/><circle cx="8.5" cy="9.5" r="3.6" fill="#7070e0" stroke="#0000ff" stroke-width="1.1"/><circle cx="8.5" cy="9.5" r="1.7" fill="#000"/><path d="M2.5 6 L1.5 4.5 M4.5 4.3 L3.8 2.5 M6.5 3.3 L6.2 1.5 M8.5 3 V1 M10.5 3.3 L10.8 1.5 M12.5 4.3 L13.2 2.5 M14.5 6 L15.5 4.5" stroke="#000" stroke-width="1.2"/></svg><div class="t" style="left:268px;top:176px;font-size:11.5px;color:#111;font-weight:normal;letter-spacing:-0.35px">Check BATTERY</div><div style="position:absolute;left:244px;top:225px;width:211px;height:34px;box-sizing:border-box;border:1px solid #000;background:#e6e6e6"></div><div style="position:absolute;left:244px;top:225px;width:211px;height:14px;background:#2d2d2d;"></div><div class="t" style="left:244px;top:227px;width:211px;text-align:center;font-size:10.5px;font-weight:bold;color:#fff">Test 1-2</div><div style="position:absolute;left:244px;top:238px;width:211px;height:1px;background:#000;"></div><svg style="position:absolute;left:247px;top:241px;" width="17" height="16" viewBox="0 0 17 16"><path d="M1.5 9 Q8.5 0 15.5 9" fill="none" stroke="#000" stroke-width="1.6"/><path d="M1.5 9 Q8.5 15 15.5 9" fill="#fff" stroke="#999" stroke-width="0.8"/><circle cx="8.5" cy="9.5" r="3.6" fill="#7070e0" stroke="#0000ff" stroke-width="1.1"/><circle cx="8.5" cy="9.5" r="1.7" fill="#000"/><path d="M2.5 6 L1.5 4.5 M4.5 4.3 L3.8 2.5 M6.5 3.3 L6.2 1.5 M8.5 3 V1 M10.5 3.3 L10.8 1.5 M12.5 4.3 L13.2 2.5 M14.5 6 L15.5 4.5" stroke="#000" stroke-width="1.2"/></svg><div class="t" style="left:268px;top:244px;font-size:11.5px;color:#111;font-weight:normal;letter-spacing:-0.35px">Check Main Power Fuse</div><div style="position:absolute;left:244px;top:279px;width:211px;height:48px;box-sizing:border-box;border:1px solid #000;background:#e6e6e6"></div><div style="position:absolute;left:244px;top:279px;width:211px;height:14px;background:#2d2d2d;"></div><div class="t" style="left:244px;top:281px;width:211px;text-align:center;font-size:10.5px;font-weight:bold;color:#fff">Fault Group # 2</div><div style="position:absolute;left:244px;top:293px;width:211px;height:1px;background:#000;"></div><div style="position:absolute;left:245px;top:294px;width:209px;height:11px;background:#c8c8c8;"></div><div style="position:absolute;left:244px;top:305px;width:211px;height:1px;background:#000;"></div><div class="t" style="left:244px;top:294px;width:211px;text-align:center;font-size:10.5px;font-weight:bold;color:#000">1 Item</div><svg style="position:absolute;left:247px;top:310px;" width="18" height="15" viewBox="0 0 18 15"><g transform="rotate(-28 9 7)"><rect x="2" y="3.5" width="14" height="6.5" rx="1.5" fill="#c8c8c8" stroke="#000" stroke-width="1"/><path d="M4 10 V13 M6.5 10 V13 M9 10 V13 M11.5 10 V13 M14 10 V13" stroke="#000" stroke-width="1.1"/></g></svg><div class="t" style="left:268px;top:311px;font-size:11.5px;color:#111;font-weight:normal;letter-spacing:-0.35px">Ignition Switch</div><div style="position:absolute;left:244px;top:347px;width:211px;height:34px;box-sizing:border-box;border:1px solid #000;background:#e6e6e6"></div><div style="position:absolute;left:244px;top:347px;width:211px;height:14px;background:#2d2d2d;"></div><div class="t" style="left:244px;top:349px;width:211px;text-align:center;font-size:10.5px;font-weight:bold;color:#fff">Test 2-1</div><div style="position:absolute;left:244px;top:360px;width:211px;height:1px;background:#000;"></div><svg style="position:absolute;left:247px;top:362px;" width="17" height="19" viewBox="0 0 17 19"><path d="M0.5 2 V7 M6.5 2 V7 M12.5 2 V7 M14.5 2 V7" stroke="#000" stroke-width="1.2"/><ellipse cx="3.5" cy="4.5" rx="1.6" ry="2.3" fill="none" stroke="#000" stroke-width="1.1"/><ellipse cx="9.5" cy="4.5" rx="1.6" ry="2.3" fill="none" stroke="#000" stroke-width="1.1"/><text x="4.5" y="17" font-size="12.5" font-weight="bold" fill="#e00000">?</text></svg><div class="t" style="left:268px;top:366px;font-size:11.5px;color:#111;font-weight:normal;letter-spacing:-0.35px">Test for Pedal Linkage</div><div style="position:absolute;left:244px;top:415px;width:211px;height:34px;box-sizing:border-box;border:1px solid #000;background:#e6e6e6"></div><div style="position:absolute;left:244px;top:415px;width:211px;height:14px;background:#2d2d2d;"></div><div class="t" style="left:244px;top:417px;width:211px;text-align:center;font-size:10.5px;font-weight:bold;color:#fff">Test 2-2</div><div style="position:absolute;left:244px;top:428px;width:211px;height:1px;background:#000;"></div><svg style="position:absolute;left:247px;top:430px;" width="17" height="19" viewBox="0 0 17 19"><path d="M0.5 2 V7 M6.5 2 V7 M12.5 2 V7 M14.5 2 V7" stroke="#000" stroke-width="1.2"/><ellipse cx="3.5" cy="4.5" rx="1.6" ry="2.3" fill="none" stroke="#000" stroke-width="1.1"/><ellipse cx="9.5" cy="4.5" rx="1.6" ry="2.3" fill="none" stroke="#000" stroke-width="1.1"/><text x="4.5" y="17" font-size="12.5" font-weight="bold" fill="#e00000">?</text></svg><div class="t" style="left:268px;top:434px;font-size:11.5px;color:#111;font-weight:normal;letter-spacing:-0.35px">test for Master Cylinder</div><div style="position:absolute;left:244px;top:469px;width:211px;height:48px;box-sizing:border-box;border:1px solid #000;background:#e6e6e6"></div><div style="position:absolute;left:244px;top:469px;width:211px;height:14px;background:#2d2d2d;"></div><div class="t" style="left:244px;top:471px;width:211px;text-align:center;font-size:10.5px;font-weight:bold;color:#fff">Fault Group # 5</div><div style="position:absolute;left:244px;top:483px;width:211px;height:1px;background:#000;"></div><div style="position:absolute;left:245px;top:484px;width:209px;height:11px;background:#c8c8c8;"></div><div style="position:absolute;left:244px;top:495px;width:211px;height:1px;background:#000;"></div><div class="t" style="left:244px;top:484px;width:211px;text-align:center;font-size:10.5px;font-weight:bold;color:#000">1 Item</div><svg style="position:absolute;left:247px;top:500px;" width="18" height="15" viewBox="0 0 18 15"><g transform="rotate(-28 9 7)"><rect x="2" y="3.5" width="14" height="6.5" rx="1.5" fill="#c8c8c8" stroke="#000" stroke-width="1"/><path d="M4 10 V13 M6.5 10 V13 M9 10 V13 M11.5 10 V13 M14 10 V13" stroke="#000" stroke-width="1.1"/></g></svg><div class="t" style="left:268px;top:501px;font-size:11.5px;color:#111;font-weight:normal;letter-spacing:-0.35px">Brake Pedal</div><div style="position:absolute;left:244px;top:537px;width:211px;height:34px;box-sizing:border-box;border:1px solid #000;background:#e6e6e6"></div><div style="position:absolute;left:244px;top:537px;width:211px;height:14px;background:#2d2d2d;"></div><div class="t" style="left:244px;top:539px;width:211px;text-align:center;font-size:10.5px;font-weight:bold;color:#fff">Test 3-1</div><div style="position:absolute;left:244px;top:550px;width:211px;height:1px;background:#000;"></div><svg style="position:absolute;left:247px;top:553px;" width="17" height="16" viewBox="0 0 17 16"><path d="M1.5 9 Q8.5 0 15.5 9" fill="none" stroke="#000" stroke-width="1.6"/><path d="M1.5 9 Q8.5 15 15.5 9" fill="#fff" stroke="#999" stroke-width="0.8"/><circle cx="8.5" cy="9.5" r="3.6" fill="#7070e0" stroke="#0000ff" stroke-width="1.1"/><circle cx="8.5" cy="9.5" r="1.7" fill="#000"/><path d="M2.5 6 L1.5 4.5 M4.5 4.3 L3.8 2.5 M6.5 3.3 L6.2 1.5 M8.5 3 V1 M10.5 3.3 L10.8 1.5 M12.5 4.3 L13.2 2.5 M14.5 6 L15.5 4.5" stroke="#000" stroke-width="1.2"/></svg><div class="t" style="left:268px;top:556px;font-size:11.5px;color:#111;font-weight:normal;letter-spacing:-0.35px">Check BATTERY</div><div style="position:absolute;left:244px;top:605px;width:211px;height:34px;box-sizing:border-box;border:1px solid #000;background:#e6e6e6"></div><div style="position:absolute;left:244px;top:605px;width:211px;height:14px;background:#2d2d2d;"></div><div class="t" style="left:244px;top:607px;width:211px;text-align:center;font-size:10.5px;font-weight:bold;color:#fff">Test 3-2</div><div style="position:absolute;left:244px;top:618px;width:211px;height:1px;background:#000;"></div><svg style="position:absolute;left:247px;top:621px;" width="17" height="16" viewBox="0 0 17 16"><path d="M1.5 9 Q8.5 0 15.5 9" fill="none" stroke="#000" stroke-width="1.6"/><path d="M1.5 9 Q8.5 15 15.5 9" fill="#fff" stroke="#999" stroke-width="0.8"/><circle cx="8.5" cy="9.5" r="3.6" fill="#7070e0" stroke="#0000ff" stroke-width="1.1"/><circle cx="8.5" cy="9.5" r="1.7" fill="#000"/><path d="M2.5 6 L1.5 4.5 M4.5 4.3 L3.8 2.5 M6.5 3.3 L6.2 1.5 M8.5 3 V1 M10.5 3.3 L10.8 1.5 M12.5 4.3 L13.2 2.5 M14.5 6 L15.5 4.5" stroke="#000" stroke-width="1.2"/></svg><div class="t" style="left:268px;top:624px;font-size:11.5px;color:#111;font-weight:normal;letter-spacing:-0.35px">Check Main Power Fuse</div><div style="position:absolute;left:244px;top:659px;width:211px;height:48px;box-sizing:border-box;border:1px solid #000;background:#e6e6e6"></div><div style="position:absolute;left:244px;top:659px;width:211px;height:14px;background:#2d2d2d;"></div><div class="t" style="left:244px;top:661px;width:211px;text-align:center;font-size:10.5px;font-weight:bold;color:#fff">Fault Group # 8</div><div style="position:absolute;left:244px;top:673px;width:211px;height:1px;background:#000;"></div><div style="position:absolute;left:245px;top:674px;width:209px;height:11px;background:#c8c8c8;"></div><div style="position:absolute;left:244px;top:685px;width:211px;height:1px;background:#000;"></div><div class="t" style="left:244px;top:674px;width:211px;text-align:center;font-size:10.5px;font-weight:bold;color:#000">1 Item</div><svg style="position:absolute;left:247px;top:690px;" width="18" height="15" viewBox="0 0 18 15"><g transform="rotate(-28 9 7)"><rect x="2" y="3.5" width="14" height="6.5" rx="1.5" fill="#c8c8c8" stroke="#000" stroke-width="1"/><path d="M4 10 V13 M6.5 10 V13 M9 10 V13 M11.5 10 V13 M14 10 V13" stroke="#000" stroke-width="1.1"/></g></svg><div class="t" style="left:268px;top:691px;font-size:11.5px;color:#111;font-weight:normal;letter-spacing:-0.35px">Ignition Switch</div><div style="position:absolute;left:244px;top:727px;width:211px;height:34px;box-sizing:border-box;border:1px solid #000;background:#e6e6e6"></div><div style="position:absolute;left:244px;top:727px;width:211px;height:14px;background:#2d2d2d;"></div><div class="t" style="left:244px;top:729px;width:211px;text-align:center;font-size:10.5px;font-weight:bold;color:#fff">Test 4-1</div><div style="position:absolute;left:244px;top:740px;width:211px;height:1px;background:#000;"></div><svg style="position:absolute;left:247px;top:743px;" width="17" height="16" viewBox="0 0 17 16"><path d="M1.5 9 Q8.5 0 15.5 9" fill="none" stroke="#000" stroke-width="1.6"/><path d="M1.5 9 Q8.5 15 15.5 9" fill="#fff" stroke="#999" stroke-width="0.8"/><circle cx="8.5" cy="9.5" r="3.6" fill="#7070e0" stroke="#0000ff" stroke-width="1.1"/><circle cx="8.5" cy="9.5" r="1.7" fill="#000"/><path d="M2.5 6 L1.5 4.5 M4.5 4.3 L3.8 2.5 M6.5 3.3 L6.2 1.5 M8.5 3 V1 M10.5 3.3 L10.8 1.5 M12.5 4.3 L13.2 2.5 M14.5 6 L15.5 4.5" stroke="#000" stroke-width="1.2"/></svg><div class="t" style="left:268px;top:746px;font-size:11.5px;color:#111;font-weight:normal;letter-spacing:-0.35px">Fill Brake Fluid</div><div style="position:absolute;left:244px;top:795px;width:211px;height:34px;box-sizing:border-box;border:1px solid #000;background:#e6e6e6"></div><div style="position:absolute;left:244px;top:795px;width:211px;height:14px;background:#2d2d2d;"></div><div class="t" style="left:244px;top:797px;width:211px;text-align:center;font-size:10.5px;font-weight:bold;color:#fff">Test 4-2</div><div style="position:absolute;left:244px;top:808px;width:211px;height:1px;background:#000;"></div><svg style="position:absolute;left:247px;top:810px;" width="17" height="19" viewBox="0 0 17 19"><path d="M0.5 2 V7 M6.5 2 V7 M12.5 2 V7 M14.5 2 V7" stroke="#000" stroke-width="1.2"/><ellipse cx="3.5" cy="4.5" rx="1.6" ry="2.3" fill="none" stroke="#000" stroke-width="1.1"/><ellipse cx="9.5" cy="4.5" rx="1.6" ry="2.3" fill="none" stroke="#000" stroke-width="1.1"/><text x="4.5" y="17" font-size="12.5" font-weight="bold" fill="#e00000">?</text></svg><div class="t" style="left:268px;top:814px;font-size:11.5px;color:#111;font-weight:normal;letter-spacing:-0.35px">test Sensor Rotor from Le...</div><div style="position:absolute;left:244px;top:951px;width:211px;height:34px;box-sizing:border-box;border:1px solid #000;background:#e6e6e6"></div><div style="position:absolute;left:244px;top:951px;width:211px;height:14px;background:#2d2d2d;"></div><div class="t" style="left:244px;top:953px;width:211px;text-align:center;font-size:10.5px;font-weight:bold;color:#fff">Test 4-4</div><div style="position:absolute;left:244px;top:964px;width:211px;height:1px;background:#000;"></div><svg style="position:absolute;left:247px;top:966px;" width="17" height="19" viewBox="0 0 17 19"><path d="M0.5 2 V7 M6.5 2 V7 M12.5 2 V7 M14.5 2 V7" stroke="#000" stroke-width="1.2"/><ellipse cx="3.5" cy="4.5" rx="1.6" ry="2.3" fill="none" stroke="#000" stroke-width="1.1"/><ellipse cx="9.5" cy="4.5" rx="1.6" ry="2.3" fill="none" stroke="#000" stroke-width="1.1"/><text x="4.5" y="17" font-size="12.5" font-weight="bold" fill="#e00000">?</text></svg><div class="t" style="left:268px;top:970px;font-size:11.5px;color:#111;font-weight:normal;letter-spacing:-0.35px">test Sensor Rotor from Le...</div><div style="position:absolute;left:480px;top:157px;width:211px;height:48px;box-sizing:border-box;border:1px solid #000;background:#e6e6e6"></div><div style="position:absolute;left:480px;top:157px;width:211px;height:14px;background:#2d2d2d;"></div><div class="t" style="left:480px;top:159px;width:211px;text-align:center;font-size:10.5px;font-weight:bold;color:#fff">Fault Group # 0</div><div style="position:absolute;left:480px;top:171px;width:211px;height:1px;background:#000;"></div><div style="position:absolute;left:481px;top:172px;width:209px;height:11px;background:#c8c8c8;"></div><div style="position:absolute;left:480px;top:183px;width:211px;height:1px;background:#000;"></div><div class="t" style="left:480px;top:172px;width:211px;text-align:center;font-size:10.5px;font-weight:bold;color:#000">1 Item</div><svg style="position:absolute;left:483px;top:188px;" width="18" height="15" viewBox="0 0 18 15"><g transform="rotate(-28 9 7)"><rect x="2" y="3.5" width="14" height="6.5" rx="1.5" fill="#c8c8c8" stroke="#000" stroke-width="1"/><path d="M4 10 V13 M6.5 10 V13 M9 10 V13 M11.5 10 V13 M14 10 V13" stroke="#000" stroke-width="1.1"/></g></svg><div class="t" style="left:504px;top:189px;font-size:11.5px;color:#111;font-weight:normal;letter-spacing:-0.35px">BATTERY</div><div style="position:absolute;left:480px;top:863px;width:222px;height:68px;box-sizing:border-box;border:1px solid #000;background:#e6e6e6"></div><div style="position:absolute;left:480px;top:863px;width:222px;height:14px;background:#2d2d2d;"></div><div class="t" style="left:480px;top:865px;width:222px;text-align:center;font-size:10.5px;font-weight:bold;color:#fff">Fault Group # 11</div><div style="position:absolute;left:480px;top:877px;width:222px;height:1px;background:#000;"></div><div style="position:absolute;left:481px;top:878px;width:220px;height:11px;background:#c8c8c8;"></div><div style="position:absolute;left:480px;top:889px;width:222px;height:1px;background:#000;"></div><div class="t" style="left:480px;top:878px;width:222px;text-align:center;font-size:10.5px;font-weight:bold;color:#000">2 Items</div><svg style="position:absolute;left:483px;top:894px;" width="18" height="15" viewBox="0 0 18 15"><g transform="rotate(-28 9 7)"><rect x="2" y="3.5" width="14" height="6.5" rx="1.5" fill="#f0e800" stroke="#000" stroke-width="1"/><path d="M4 10 V13 M6.5 10 V13 M9 10 V13 M11.5 10 V13 M14 10 V13" stroke="#000" stroke-width="1.1"/></g></svg><div class="t" style="left:504px;top:895px;font-size:11.5px;color:#111;font-weight:normal;letter-spacing:-0.35px">LF Disc Assy::ABS Speed Sensor</div><svg style="position:absolute;left:483px;top:914px;" width="18" height="15" viewBox="0 0 18 15"><g transform="rotate(-28 9 7)"><rect x="2" y="3.5" width="14" height="6.5" rx="1.5" fill="#c8c8c8" stroke="#000" stroke-width="1"/><path d="M4 10 V13 M6.5 10 V13 M9 10 V13 M11.5 10 V13 M14 10 V13" stroke="#000" stroke-width="1.1"/></g></svg><div class="t" style="left:504px;top:915px;font-size:11.5px;color:#111;font-weight:normal;letter-spacing:-0.35px">LF Disc Assy::Tone Ring</div><div style="position:absolute;left:480px;top:951px;width:211px;height:34px;box-sizing:border-box;border:1px solid #000;background:#e6e6e6"></div><div style="position:absolute;left:480px;top:951px;width:211px;height:14px;background:#2d2d2d;"></div><div class="t" style="left:480px;top:953px;width:211px;text-align:center;font-size:10.5px;font-weight:bold;color:#fff">Test 4-5</div><div style="position:absolute;left:480px;top:964px;width:211px;height:1px;background:#000;"></div><svg style="position:absolute;left:483px;top:967px;" width="17" height="16" viewBox="0 0 17 16"><path d="M1.5 9 Q8.5 0 15.5 9" fill="none" stroke="#000" stroke-width="1.6"/><path d="M1.5 9 Q8.5 15 15.5 9" fill="#fff" stroke="#999" stroke-width="0.8"/><circle cx="8.5" cy="9.5" r="3.6" fill="#7070e0" stroke="#0000ff" stroke-width="1.1"/><circle cx="8.5" cy="9.5" r="1.7" fill="#000"/><path d="M2.5 6 L1.5 4.5 M4.5 4.3 L3.8 2.5 M6.5 3.3 L6.2 1.5 M8.5 3 V1 M10.5 3.3 L10.8 1.5 M12.5 4.3 L13.2 2.5 M14.5 6 L15.5 4.5" stroke="#000" stroke-width="1.2"/></svg><div class="t" style="left:504px;top:970px;font-size:11.5px;color:#111;font-weight:normal;letter-spacing:-0.35px">Replace Speed Sensor LR</div><div style="position:absolute;left:716px;top:951px;width:14px;height:47px;overflow:hidden"><div style="position:absolute;left:0;top:0;width:40px;height:60px;box-sizing:border-box;border:1px solid #000;background:#e6e6e6"></div><div style="position:absolute;left:0;top:0;width:40px;height:14px;background:#2d2d2d"></div><div style="position:absolute;left:0;top:14px;width:40px;height:13px;background:#c8c8c8;border-top:1px solid #000;border-bottom:1px solid #000;box-sizing:border-box"></div><svg style="position:absolute;left:3px;top:31px;" width="18" height="15" viewBox="0 0 18 15"><g transform="rotate(-28 9 7)"><rect x="2" y="3.5" width="14" height="6.5" rx="1.5" fill="#f0e800" stroke="#000" stroke-width="1"/><path d="M4 10 V13 M6.5 10 V13 M9 10 V13 M11.5 10 V13 M14 10 V13" stroke="#000" stroke-width="1.1"/></g></svg></div><div style="position:absolute;left:730px;top:154px;width:16px;height:844px;background:#f0f0f0;"></div><div style="position:absolute;left:730px;top:171px;width:16px;height:60px;background:#cdcdcd;"></div><svg style="position:absolute;left:730px;top:155px;" width="16" height="16" viewBox="0 0 16 16"><path d="M4 10 L8 6 L12 10" stroke="#606060" stroke-width="1.8" fill="none"/></svg><svg style="position:absolute;left:730px;top:981px;" width="16" height="16" viewBox="0 0 16 16"><path d="M4 6 L8 10 L12 6" stroke="#606060" stroke-width="1.8" fill="none"/></svg><div style="position:absolute;left:6px;top:998px;width:740px;height:16px;background:#f0f0f0;"></div><div style="position:absolute;left:22px;top:998px;width:172px;height:16px;background:#cdcdcd;"></div><svg style="position:absolute;left:6px;top:998px;" width="16" height="16" viewBox="0 0 16 16"><path d="M10 4 L6 8 L10 12" stroke="#606060" stroke-width="1.8" fill="none"/></svg><svg style="position:absolute;left:713px;top:998px;" width="16" height="16" viewBox="0 0 16 16"><path d="M6 4 L10 8 L6 12" stroke="#606060" stroke-width="1.8" fill="none"/></svg><div style="position:absolute;left:751px;top:95px;width:4px;height:926px;background:#f0f0f0;"></div><div style="position:absolute;left:755px;top:95px;width:1153px;height:716px;background:#f0f0f0;"></div><div style="position:absolute;left:755px;top:95px;width:1150px;height:1px;background:#646464;"></div><div style="position:absolute;left:755px;top:95px;width:1px;height:716px;background:#646464;"></div><div style="position:absolute;left:756px;top:96px;width:1149px;height:1px;background:#a8a8a8;"></div><div style="position:absolute;left:756px;top:96px;width:1px;height:715px;background:#a8a8a8;"></div><div style="position:absolute;left:757px;top:97px;width:1148px;height:1px;background:#646464;"></div><div style="position:absolute;left:757px;top:97px;width:1px;height:714px;background:#646464;"></div><svg style="position:absolute;left:757px;top:98px" width="1130" height="695" viewBox="757 98 1130 695"><defs><pattern id="grd" x="760" y="100" width="161" height="161" patternUnits="userSpaceOnUse"><path d="M0 0h1v1h-1zM0 9h1v1h-1zM0 18h1v1h-1zM0 27h1v1h-1zM0 36h1v1h-1zM0 45h1v1h-1zM0 54h1v1h-1zM0 63h1v1h-1zM0 72h1v1h-1zM0 81h1v1h-1zM0 90h1v1h-1zM0 99h1v1h-1zM0 108h1v1h-1zM0 116h1v1h-1zM0 125h1v1h-1zM0 134h1v1h-1zM0 143h1v1h-1zM0 152h1v1h-1zM9 0h1v1h-1zM9 9h1v1h-1zM9 18h1v1h-1zM9 27h1v1h-1zM9 36h1v1h-1zM9 45h1v1h-1zM9 54h1v1h-1zM9 63h1v1h-1zM9 72h1v1h-1zM9 81h1v1h-1zM9 90h1v1h-1zM9 99h1v1h-1zM9 108h1v1h-1zM9 116h1v1h-1zM9 125h1v1h-1zM9 134h1v1h-1zM9 143h1v1h-1zM9 152h1v1h-1zM18 0h1v1h-1zM18 9h1v1h-1zM18 18h1v1h-1zM18 27h1v1h-1zM18 36h1v1h-1zM18 45h1v1h-1zM18 54h1v1h-1zM18 63h1v1h-1zM18 72h1v1h-1zM18 81h1v1h-1zM18 90h1v1h-1zM18 99h1v1h-1zM18 108h1v1h-1zM18 116h1v1h-1zM18 125h1v1h-1zM18 134h1v1h-1zM18 143h1v1h-1zM18 152h1v1h-1zM27 0h1v1h-1zM27 9h1v1h-1zM27 18h1v1h-1zM27 27h1v1h-1zM27 36h1v1h-1zM27 45h1v1h-1zM27 54h1v1h-1zM27 63h1v1h-1zM27 72h1v1h-1zM27 81h1v1h-1zM27 90h1v1h-1zM27 99h1v1h-1zM27 108h1v1h-1zM27 116h1v1h-1zM27 125h1v1h-1zM27 134h1v1h-1zM27 143h1v1h-1zM27 152h1v1h-1zM35 0h1v1h-1zM35 9h1v1h-1zM35 18h1v1h-1zM35 27h1v1h-1zM35 36h1v1h-1zM35 45h1v1h-1zM35 54h1v1h-1zM35 63h1v1h-1zM35 72h1v1h-1zM35 81h1v1h-1zM35 90h1v1h-1zM35 99h1v1h-1zM35 108h1v1h-1zM35 116h1v1h-1zM35 125h1v1h-1zM35 134h1v1h-1zM35 143h1v1h-1zM35 152h1v1h-1zM44 0h1v1h-1zM44 9h1v1h-1zM44 18h1v1h-1zM44 27h1v1h-1zM44 36h1v1h-1zM44 45h1v1h-1zM44 54h1v1h-1zM44 63h1v1h-1zM44 72h1v1h-1zM44 81h1v1h-1zM44 90h1v1h-1zM44 99h1v1h-1zM44 108h1v1h-1zM44 116h1v1h-1zM44 125h1v1h-1zM44 134h1v1h-1zM44 143h1v1h-1zM44 152h1v1h-1zM53 0h1v1h-1zM53 9h1v1h-1zM53 18h1v1h-1zM53 27h1v1h-1zM53 36h1v1h-1zM53 45h1v1h-1zM53 54h1v1h-1zM53 63h1v1h-1zM53 72h1v1h-1zM53 81h1v1h-1zM53 90h1v1h-1zM53 99h1v1h-1zM53 108h1v1h-1zM53 116h1v1h-1zM53 125h1v1h-1zM53 134h1v1h-1zM53 143h1v1h-1zM53 152h1v1h-1zM62 0h1v1h-1zM62 9h1v1h-1zM62 18h1v1h-1zM62 27h1v1h-1zM62 36h1v1h-1zM62 45h1v1h-1zM62 54h1v1h-1zM62 63h1v1h-1zM62 72h1v1h-1zM62 81h1v1h-1zM62 90h1v1h-1zM62 99h1v1h-1zM62 108h1v1h-1zM62 116h1v1h-1zM62 125h1v1h-1zM62 134h1v1h-1zM62 143h1v1h-1zM62 152h1v1h-1zM71 0h1v1h-1zM71 9h1v1h-1zM71 18h1v1h-1zM71 27h1v1h-1zM71 36h1v1h-1zM71 45h1v1h-1zM71 54h1v1h-1zM71 63h1v1h-1zM71 72h1v1h-1zM71 81h1v1h-1zM71 90h1v1h-1zM71 99h1v1h-1zM71 108h1v1h-1zM71 116h1v1h-1zM71 125h1v1h-1zM71 134h1v1h-1zM71 143h1v1h-1zM71 152h1v1h-1zM80 0h1v1h-1zM80 9h1v1h-1zM80 18h1v1h-1zM80 27h1v1h-1zM80 36h1v1h-1zM80 45h1v1h-1zM80 54h1v1h-1zM80 63h1v1h-1zM80 72h1v1h-1zM80 81h1v1h-1zM80 90h1v1h-1zM80 99h1v1h-1zM80 108h1v1h-1zM80 116h1v1h-1zM80 125h1v1h-1zM80 134h1v1h-1zM80 143h1v1h-1zM80 152h1v1h-1zM89 0h1v1h-1zM89 9h1v1h-1zM89 18h1v1h-1zM89 27h1v1h-1zM89 36h1v1h-1zM89 45h1v1h-1zM89 54h1v1h-1zM89 63h1v1h-1zM89 72h1v1h-1zM89 81h1v1h-1zM89 90h1v1h-1zM89 99h1v1h-1zM89 108h1v1h-1zM89 116h1v1h-1zM89 125h1v1h-1zM89 134h1v1h-1zM89 143h1v1h-1zM89 152h1v1h-1zM98 0h1v1h-1zM98 9h1v1h-1zM98 18h1v1h-1zM98 27h1v1h-1zM98 36h1v1h-1zM98 45h1v1h-1zM98 54h1v1h-1zM98 63h1v1h-1zM98 72h1v1h-1zM98 81h1v1h-1zM98 90h1v1h-1zM98 99h1v1h-1zM98 108h1v1h-1zM98 116h1v1h-1zM98 125h1v1h-1zM98 134h1v1h-1zM98 143h1v1h-1zM98 152h1v1h-1zM107 0h1v1h-1zM107 9h1v1h-1zM107 18h1v1h-1zM107 27h1v1h-1zM107 36h1v1h-1zM107 45h1v1h-1zM107 54h1v1h-1zM107 63h1v1h-1zM107 72h1v1h-1zM107 81h1v1h-1zM107 90h1v1h-1zM107 99h1v1h-1zM107 108h1v1h-1zM107 116h1v1h-1zM107 125h1v1h-1zM107 134h1v1h-1zM107 143h1v1h-1zM107 152h1v1h-1zM116 0h1v1h-1zM116 9h1v1h-1zM116 18h1v1h-1zM116 27h1v1h-1zM116 36h1v1h-1zM116 45h1v1h-1zM116 54h1v1h-1zM116 63h1v1h-1zM116 72h1v1h-1zM116 81h1v1h-1zM116 90h1v1h-1zM116 99h1v1h-1zM116 108h1v1h-1zM116 116h1v1h-1zM116 125h1v1h-1zM116 134h1v1h-1zM116 143h1v1h-1zM116 152h1v1h-1zM125 0h1v1h-1zM125 9h1v1h-1zM125 18h1v1h-1zM125 27h1v1h-1zM125 36h1v1h-1zM125 45h1v1h-1zM125 54h1v1h-1zM125 63h1v1h-1zM125 72h1v1h-1zM125 81h1v1h-1zM125 90h1v1h-1zM125 99h1v1h-1zM125 108h1v1h-1zM125 116h1v1h-1zM125 125h1v1h-1zM125 134h1v1h-1zM125 143h1v1h-1zM125 152h1v1h-1zM134 0h1v1h-1zM134 9h1v1h-1zM134 18h1v1h-1zM134 27h1v1h-1zM134 36h1v1h-1zM134 45h1v1h-1zM134 54h1v1h-1zM134 63h1v1h-1zM134 72h1v1h-1zM134 81h1v1h-1zM134 90h1v1h-1zM134 99h1v1h-1zM134 108h1v1h-1zM134 116h1v1h-1zM134 125h1v1h-1zM134 134h1v1h-1zM134 143h1v1h-1zM134 152h1v1h-1zM143 0h1v1h-1zM143 9h1v1h-1zM143 18h1v1h-1zM143 27h1v1h-1zM143 36h1v1h-1zM143 45h1v1h-1zM143 54h1v1h-1zM143 63h1v1h-1zM143 72h1v1h-1zM143 81h1v1h-1zM143 90h1v1h-1zM143 99h1v1h-1zM143 108h1v1h-1zM143 116h1v1h-1zM143 125h1v1h-1zM143 134h1v1h-1zM143 143h1v1h-1zM143 152h1v1h-1zM152 0h1v1h-1zM152 9h1v1h-1zM152 18h1v1h-1zM152 27h1v1h-1zM152 36h1v1h-1zM152 45h1v1h-1zM152 54h1v1h-1zM152 63h1v1h-1zM152 72h1v1h-1zM152 81h1v1h-1zM152 90h1v1h-1zM152 99h1v1h-1zM152 108h1v1h-1zM152 116h1v1h-1zM152 125h1v1h-1zM152 134h1v1h-1zM152 143h1v1h-1zM152 152h1v1h-1z" fill="#8a8a8a"/></pattern></defs><rect x="757" y="98" width="1130" height="695" fill="#fff"/><rect x="758" y="99" width="1127" height="692" fill="url(#grd)"/><path d="M862 241 H999 V292" fill="none" stroke="#000" stroke-width="4.2" stroke-linejoin="miter"/><path d="M862 241 H999 V292" fill="none" stroke="#e8e8e8" stroke-width="1.6"/><path d="M987 273 H999" fill="none" stroke="#000" stroke-width="4.2" stroke-linejoin="miter"/><path d="M987 273 H999" fill="none" stroke="#e8e8e8" stroke-width="1.6"/><path d="M1082 292 V248 H1706" fill="none" stroke="#000" stroke-width="4.2" stroke-linejoin="miter"/><path d="M1082 292 V248 H1706" fill="none" stroke="#e8e8e8" stroke-width="1.6"/><path d="M1097 273 H1082" fill="none" stroke="#000" stroke-width="4.2" stroke-linejoin="miter"/><path d="M1097 273 H1082" fill="none" stroke="#e8e8e8" stroke-width="1.6"/><path d="M1690 236 V652 H1172 V517 H1082" fill="none" stroke="#000" stroke-width="4.2" stroke-linejoin="miter"/><path d="M1690 236 V652 H1172 V517 H1082" fill="none" stroke="#e8e8e8" stroke-width="1.6"/><path d="M1082 511 V600 H1058 V612" fill="none" stroke="#000" stroke-width="4.2" stroke-linejoin="miter"/><path d="M1082 511 V600 H1058 V612" fill="none" stroke="#e8e8e8" stroke-width="1.6"/><path d="M1706 236 V668" fill="none" stroke="#000" stroke-width="4.2" stroke-linejoin="miter"/><path d="M1706 236 V668" fill="none" stroke="#e8e8e8" stroke-width="1.6"/><path d="M862 580 H956" fill="none" stroke="#000" stroke-width="4.2" stroke-linejoin="miter"/><path d="M862 580 H956" fill="none" stroke="#e8e8e8" stroke-width="1.6"/><path d="M963 494 H956 V637 H999" fill="none" stroke="#000" stroke-width="4.2" stroke-linejoin="miter"/><path d="M963 494 H956 V637 H999" fill="none" stroke="#e8e8e8" stroke-width="1.6"/><path d="M999 318 V340" fill="none" stroke="#000" stroke-width="4.2" stroke-linejoin="miter"/><path d="M999 318 V340" fill="none" stroke="#e8e8e8" stroke-width="1.6"/><path d="M999 387 V440" fill="none" stroke="#000" stroke-width="4.2" stroke-linejoin="miter"/><path d="M999 387 V440" fill="none" stroke="#e8e8e8" stroke-width="1.6"/><path d="M999 457 V476" fill="none" stroke="#000" stroke-width="4.2" stroke-linejoin="miter"/><path d="M999 457 V476" fill="none" stroke="#e8e8e8" stroke-width="1.6"/><path d="M1082 318 V340" fill="none" stroke="#000" stroke-width="4.2" stroke-linejoin="miter"/><path d="M1082 318 V340" fill="none" stroke="#e8e8e8" stroke-width="1.6"/><path d="M1082 387 V440" fill="none" stroke="#000" stroke-width="4.2" stroke-linejoin="miter"/><path d="M1082 387 V440" fill="none" stroke="#e8e8e8" stroke-width="1.6"/><path d="M1082 457 V476" fill="none" stroke="#000" stroke-width="4.2" stroke-linejoin="miter"/><path d="M1082 457 V476" fill="none" stroke="#e8e8e8" stroke-width="1.6"/><path d="M983 372 H956 V389" fill="none" stroke="#000" stroke-width="4.2" stroke-linejoin="miter"/><path d="M983 372 H956 V389" fill="none" stroke="#e8e8e8" stroke-width="1.6"/><path d="M1100 372 H1137 V389" fill="none" stroke="#000" stroke-width="4.2" stroke-linejoin="miter"/><path d="M1100 372 H1137 V389" fill="none" stroke="#e8e8e8" stroke-width="1.6"/><path d="M985 405 H999" fill="none" stroke="#000" stroke-width="4.2" stroke-linejoin="miter"/><path d="M985 405 H999" fill="none" stroke="#e8e8e8" stroke-width="1.6"/><path d="M1082 405 H1095" fill="none" stroke="#000" stroke-width="4.2" stroke-linejoin="miter"/><path d="M1082 405 H1095" fill="none" stroke="#e8e8e8" stroke-width="1.6"/><path d="M1066 640 H1117" fill="none" stroke="#000" stroke-width="4.2" stroke-linejoin="miter"/><path d="M1066 640 H1117" fill="none" stroke="#e8e8e8" stroke-width="1.6"/><path d="M876 195 H886" fill="none" stroke="#c0c0c0" stroke-width="1" transform="translate(0.5,0.5)"/><path d="M876 206 H886" fill="none" stroke="#c0c0c0" stroke-width="1" transform="translate(0.5,0.5)"/><path d="M876 219 H900" fill="none" stroke="#c0c0c0" stroke-width="1" transform="translate(0.5,0.5)"/><path d="M876 230 H886" fill="none" stroke="#c0c0c0" stroke-width="1" transform="translate(0.5,0.5)"/><path d="M1634 195 H1665" fill="none" stroke="#c0c0c0" stroke-width="1" transform="translate(0.5,0.5)"/><path d="M1634 206 H1665" fill="none" stroke="#c0c0c0" stroke-width="1" transform="translate(0.5,0.5)"/><path d="M1614 219 H1665" fill="none" stroke="#c0c0c0" stroke-width="1" transform="translate(0.5,0.5)"/><path d="M1634 230 H1665" fill="none" stroke="#c0c0c0" stroke-width="1" transform="translate(0.5,0.5)"/><path d="M1372 203 H1333 V266" fill="none" stroke="#c0c0c0" stroke-width="1" transform="translate(0.5,0.5)"/><path d="M1371 224 H1350 V266" fill="none" stroke="#c0c0c0" stroke-width="1" transform="translate(0.5,0.5)"/><path d="M1371 277 H1397" fill="none" stroke="#c0c0c0" stroke-width="1" transform="translate(0.5,0.5)"/><path d="M1371 295 H1397" fill="none" stroke="#c0c0c0" stroke-width="1" transform="translate(0.5,0.5)"/><path d="M1482 277 H1508" fill="none" stroke="#c0c0c0" stroke-width="1" transform="translate(0.5,0.5)"/><path d="M1482 295 H1510" fill="none" stroke="#c0c0c0" stroke-width="1" transform="translate(0.5,0.5)"/><path d="M1371 306 H1380" fill="none" stroke="#c0c0c0" stroke-width="1" transform="translate(0.5,0.5)"/><path d="M1371 317 H1515 V355" fill="none" stroke="#c0c0c0" stroke-width="1" transform="translate(0.5,0.5)"/><path d="M1371 338 H1380 V342 H1636" fill="none" stroke="#c0c0c0" stroke-width="1" transform="translate(0.5,0.5)"/><path d="M1665 342 H1725" fill="none" stroke="#c0c0c0" stroke-width="1" transform="translate(0.5,0.5)"/><path d="M1473 352 V362" fill="none" stroke="#c0c0c0" stroke-width="1" transform="translate(0.5,0.5)"/><path d="M1473 391 V408" fill="none" stroke="#c0c0c0" stroke-width="1" transform="translate(0.5,0.5)"/><path d="M1371 408 H1636" fill="none" stroke="#c0c0c0" stroke-width="1" transform="translate(0.5,0.5)"/><path d="M1515 400 V503" fill="none" stroke="#c0c0c0" stroke-width="1" transform="translate(0.5,0.5)"/><path d="M1371 423 H1515" fill="none" stroke="#c0c0c0" stroke-width="1" transform="translate(0.5,0.5)"/><path d="M1371 436 H1380" fill="none" stroke="#c0c0c0" stroke-width="1" transform="translate(0.5,0.5)"/><path d="M1371 503 H1515" fill="none" stroke="#c0c0c0" stroke-width="1" transform="translate(0.5,0.5)"/><path d="M1665 408 H1668 V410 H1725" fill="none" stroke="#c0c0c0" stroke-width="1" transform="translate(0.5,0.5)"/><path d="M1515 435 H1550" fill="none" stroke="#c0c0c0" stroke-width="1" transform="translate(0.5,0.5)"/><path d="M1573 435 H1582 V402" fill="none" stroke="#c0c0c0" stroke-width="1" transform="translate(0.5,0.5)"/><path d="M1294 297 H1308" fill="none" stroke="#c0c0c0" stroke-width="1" transform="translate(0.5,0.5)"/><path d="M1294 312 H1308" fill="none" stroke="#c0c0c0" stroke-width="1" transform="translate(0.5,0.5)"/><path d="M1200 297 H1214" fill="none" stroke="#c0c0c0" stroke-width="1" transform="translate(0.5,0.5)"/><path d="M1200 312 H1214" fill="none" stroke="#c0c0c0" stroke-width="1" transform="translate(0.5,0.5)"/><path d="M1294 507 H1308" fill="none" stroke="#c0c0c0" stroke-width="1" transform="translate(0.5,0.5)"/><path d="M1294 522 H1308" fill="none" stroke="#c0c0c0" stroke-width="1" transform="translate(0.5,0.5)"/><path d="M1200 507 H1214" fill="none" stroke="#c0c0c0" stroke-width="1" transform="translate(0.5,0.5)"/><path d="M1200 522 H1214" fill="none" stroke="#c0c0c0" stroke-width="1" transform="translate(0.5,0.5)"/><path d="M1297 331 H1308" fill="none" stroke="#c0c0c0" stroke-width="1" transform="translate(0.5,0.5)"/><path d="M1297 342 H1308" fill="none" stroke="#c0c0c0" stroke-width="1" transform="translate(0.5,0.5)"/><path d="M1297 352 H1308" fill="none" stroke="#c0c0c0" stroke-width="1" transform="translate(0.5,0.5)"/><path d="M1297 363 H1308" fill="none" stroke="#c0c0c0" stroke-width="1" transform="translate(0.5,0.5)"/><path d="M1297 440 H1308" fill="none" stroke="#c0c0c0" stroke-width="1" transform="translate(0.5,0.5)"/><path d="M1297 451 H1308" fill="none" stroke="#c0c0c0" stroke-width="1" transform="translate(0.5,0.5)"/><path d="M1297 462 H1308" fill="none" stroke="#c0c0c0" stroke-width="1" transform="translate(0.5,0.5)"/><path d="M1297 473 H1308" fill="none" stroke="#c0c0c0" stroke-width="1" transform="translate(0.5,0.5)"/><path d="M1665 476 H1725" fill="none" stroke="#c0c0c0" stroke-width="1" transform="translate(0.5,0.5)"/><path d="M1665 544 H1725" fill="none" stroke="#c0c0c0" stroke-width="1" transform="translate(0.5,0.5)"/><path d="M1665 612 H1725" fill="none" stroke="#c0c0c0" stroke-width="1" transform="translate(0.5,0.5)"/><path d="M1180 547 H1317 V534" fill="none" stroke="#c0c0c0" stroke-width="1" transform="translate(0.5,0.5)"/><path d="M1035 590 V548 H1112" fill="none" stroke="#c0c0c0" stroke-width="1" transform="translate(0.5,0.5)"/><path d="M1143 548 H1308" fill="none" stroke="#c0c0c0" stroke-width="1" transform="translate(0.5,0.5)"/><path d="M1035 548 V590" fill="none" stroke="#c0c0c0" stroke-width="1" transform="translate(0.5,0.5)"/><path d="M1300 588 H1396" fill="none" stroke="#c0c0c0" stroke-width="1" transform="translate(0.5,0.5)"/><path d="M1432 588 H1450" fill="none" stroke="#c0c0c0" stroke-width="1" transform="translate(0.5,0.5)"/><path d="M1415 606 V612 H1480" fill="none" stroke="#c0c0c0" stroke-width="1" transform="translate(0.5,0.5)"/><path d="M1120 615 V619 H1130 V610" fill="none" stroke="#c0c0c0" stroke-width="1" transform="translate(0.5,0.5)"/><path d="M1104 581 H1150" fill="none" stroke="#c0c0c0" stroke-width="1" transform="translate(0.5,0.5)"/><path d="M1660 656 H1665" fill="none" stroke="#c0c0c0" stroke-width="1" transform="translate(0.5,0.5)"/><path d="M1634 676 H1665" fill="none" stroke="#c0c0c0" stroke-width="1" transform="translate(0.5,0.5)"/><path d="M1634 686 H1665" fill="none" stroke="#c0c0c0" stroke-width="1" transform="translate(0.5,0.5)"/><path d="M1618 697 H1665" fill="none" stroke="#c0c0c0" stroke-width="1" transform="translate(0.5,0.5)"/><path d="M1634 708 H1665" fill="none" stroke="#c0c0c0" stroke-width="1" transform="translate(0.5,0.5)"/><path d="M1632 755 H1654" fill="none" stroke="#c0c0c0" stroke-width="1" transform="translate(0.5,0.5)"/><path d="M862 697 H898" fill="none" stroke="#c0c0c0" stroke-width="1" transform="translate(0.5,0.5)"/><path d="M876 673 H886" fill="none" stroke="#c0c0c0" stroke-width="1" transform="translate(0.5,0.5)"/><path d="M876 684 H886" fill="none" stroke="#c0c0c0" stroke-width="1" transform="translate(0.5,0.5)"/><path d="M876 708 H886" fill="none" stroke="#c0c0c0" stroke-width="1" transform="translate(0.5,0.5)"/><path d="M862 755 H893" fill="none" stroke="#c0c0c0" stroke-width="1" transform="translate(0.5,0.5)"/><path d="M1455 341 V352" fill="none" stroke="#c0c0c0" stroke-width="1" transform="translate(0.5,0.5)"/><path d="M1635 400 H1628" fill="none" stroke="#c0c0c0" stroke-width="1" transform="translate(0.5,0.5)"/><path d="M891.25 215.5 L895.25 219 L891.25 222.5 Z" fill="#000"/><path d="M1351.75 199.5 L1347.75 203 L1351.75 206.5 Z" fill="#000"/><path d="M1330.5 235.25 L1334 239.25 L1337.5 235.25 Z" fill="#000"/><path d="M1359.75 220.5 L1355.75 224 L1359.75 227.5 Z" fill="#000"/><path d="M1360.25 220.5 L1364.25 224 L1360.25 227.5 Z" fill="#000"/><path d="M1346.5 244.75 L1350 240.75 L1353.5 244.75 Z" fill="#000"/><path d="M1384.75 273.5 L1380.75 277 L1384.75 280.5 Z" fill="#000"/><path d="M1384.75 291.5 L1380.75 295 L1384.75 298.5 Z" fill="#000"/><path d="M1494.75 273.5 L1490.75 277 L1494.75 280.5 Z" fill="#000"/><path d="M1495.75 291.5 L1491.75 295 L1495.75 298.5 Z" fill="#000"/><path d="M1298.25 293.5 L1302.25 297 L1298.25 300.5 Z" fill="#000"/><path d="M1298.25 308.5 L1302.25 312 L1298.25 315.5 Z" fill="#000"/><path d="M1298.25 503.5 L1302.25 507 L1298.25 510.5 Z" fill="#000"/><path d="M1298.25 518.5 L1302.25 522 L1298.25 525.5 Z" fill="#000"/><path d="M1444.75 313.5 L1440.75 317 L1444.75 320.5 Z" fill="#000"/><path d="M1445.25 313.5 L1449.25 317 L1445.25 320.5 Z" fill="#000"/><path d="M1382.25 334.5 L1386.25 338 L1382.25 341.5 Z" fill="#000"/><path d="M1511.5 342.75 L1515 338.75 L1518.5 342.75 Z" fill="#000"/><path d="M1511.5 343.25 L1515 347.25 L1518.5 343.25 Z" fill="#000"/><path d="M1511.25 346.5 L1515.25 350 L1511.25 353.5 Z" fill="#000"/><path d="M1609.25 404.5 L1613.25 408 L1609.25 411.5 Z" fill="#000"/><path d="M1623.25 338.5 L1627.25 342 L1623.25 345.5 Z" fill="#000"/><path d="M1697.25 406.5 L1701.25 410 L1697.25 413.5 Z" fill="#000"/><path d="M1697.25 472.5 L1701.25 476 L1697.25 479.5 Z" fill="#000"/><path d="M1697.25 540.5 L1701.25 544 L1697.25 547.5 Z" fill="#000"/><path d="M1697.25 608.5 L1701.25 612 L1697.25 615.5 Z" fill="#000"/><path d="M1703.75 338.5 L1699.75 342 L1703.75 345.5 Z" fill="#000"/><path d="M1444.25 419.5 L1448.25 423 L1444.25 426.5 Z" fill="#000"/><path d="M1469.25 415.5 L1473.25 419 L1469.25 422.5 Z" fill="#000"/><path d="M1511.5 439.25 L1515 443.25 L1518.5 439.25 Z" fill="#000"/><path d="M1502.75 467.5 L1498.75 471 L1502.75 474.5 Z" fill="#000"/><path d="M1442.75 499.5 L1438.75 503 L1442.75 506.5 Z" fill="#000"/><path d="M1443.25 499.5 L1447.25 503 L1443.25 506.5 Z" fill="#000"/><path d="M1511.5 501.25 L1515 505.25 L1518.5 501.25 Z" fill="#000"/><path d="M1232.25 543.5 L1236.25 547 L1232.25 550.5 Z" fill="#000"/><path d="M1313.5 539.75 L1317 535.75 L1320.5 539.75 Z" fill="#000"/><path d="M1373.25 584.5 L1377.25 588 L1373.25 591.5 Z" fill="#000"/><path d="M1444.75 608.5 L1440.75 612 L1444.75 615.5 Z" fill="#000"/><path d="M1411.5 608.75 L1415 604.75 L1418.5 608.75 Z" fill="#000"/><path d="M1641.75 215.5 L1637.75 219 L1641.75 222.5 Z" fill="#000"/><path d="M1648.75 147.5 L1644.75 151 L1648.75 154.5 Z" fill="#000"/><path d="M1650.25 147.5 L1654.25 151 L1650.25 154.5 Z" fill="#000"/><path d="M892.75 147.5 L888.75 151 L892.75 154.5 Z" fill="#000"/><path d="M894.25 147.5 L898.25 151 L894.25 154.5 Z" fill="#000"/><path d="M1637.75 751.5 L1633.75 755 L1637.75 758.5 Z" fill="#000"/><path d="M1638.25 751.5 L1642.25 755 L1638.25 758.5 Z" fill="#000"/><path d="M1648.75 751.5 L1644.75 755 L1648.75 758.5 Z" fill="#000"/><path d="M1649.25 751.5 L1653.25 755 L1649.25 758.5 Z" fill="#000"/><path d="M888.25 693.5 L892.25 697 L888.25 700.5 Z" fill="#000"/><path d="M1641.75 693.5 L1637.75 697 L1641.75 700.5 Z" fill="#000"/><path d="M897.75 751.5 L893.75 755 L897.75 758.5 Z" fill="#000"/><path d="M1010.25 570.5 L1014.25 574 L1010.25 577.5 Z" fill="#000"/><path d="M1006.5 580.25 L1010 584.25 L1013.5 580.25 Z" fill="#000"/><path d="M1006.5 600.25 L1010 604.25 L1013.5 600.25 Z" fill="#000"/><path d="M1126.5 607.75 L1130 603.75 L1133.5 607.75 Z" fill="#000"/><path d="M1116.5 614.75 L1120 610.75 L1123.5 614.75 Z" fill="#000"/><path d="M1031.5 566.75 L1035 562.75 L1038.5 566.75 Z" fill="#000"/><path d="M1072.25 544.5 L1076.25 548 L1072.25 551.5 Z" fill="#000"/><path d="M1049.75 625.5 L1045.75 629 L1049.75 632.5 Z" fill="#000"/><path d="M1054.5 613.75 L1058 609.75 L1061.5 613.75 Z" fill="#000"/><path d="M766.5 147.5 C766.5 136.5 774.5 133.5 792.5 132.3 Q827.0 130.5 861.5 132.3 C879.5 133.5 887.5 136.5 887.5 147.5 V155.5 C887.5 166.5 879.5 169.5 861.5 170.7 Q827.0 172.5 792.5 170.7 C774.5 169.5 766.5 166.5 766.5 155.5 Z" fill="#c8c8c8" stroke="#000" stroke-width="1.3"/><text x="827" y="155.9" font-size="13.5" font-weight="bold" text-anchor="middle" fill="#000" >RF Tire</text><rect x="783.5" y="172.5" width="88" height="17" fill="#c8c8c8" stroke="#000" stroke-width="1.2"/><text x="827" y="184.8" font-size="10.5" font-weight="bold" text-anchor="middle" fill="#000" >RF Wheel</text><rect x="779.5" y="190.5" width="96" height="45" fill="#c8c8c8" stroke="#000" stroke-width="1.2"/><text x="827" y="217.7" font-size="13" font-weight="bold" text-anchor="middle" fill="#000" >RF Disc Assy</text><path d="M902 151.0 L913 140.5 H1023 L1034 151.0 L1023 161.5 H913 Z" fill="#c8c8c8" stroke="#000" stroke-width="1.1"/><text x="968" y="155.9" font-size="13.5" font-weight="bold" text-anchor="middle" fill="#000" >RF Wheel Torque</text><path d="M900.5 211.5 H1006 L1021 219.0 L1006 226.5 H900.5 Z" fill="#c8c8c8" stroke="#000" stroke-width="1.1"/><text x="957" y="223.9" font-size="13.5" font-weight="bold" text-anchor="middle" fill="#000" >RF Pad Squealer</text><rect x="903.5" y="232.5" width="53" height="17" fill="#c8c8c8" stroke="#000" stroke-width="1.2"/><text x="930" y="246.0" font-size="14" font-weight="bold" text-anchor="middle" fill="#000" >FR Line</text><text x="885" y="197" font-size="4.3" font-weight="bold" text-anchor="start" fill="#333">RFIN PTRQ</text><text x="885" y="208" font-size="4.3" font-weight="bold" text-anchor="start" fill="#333">RFOUT PTRQ</text><text x="885" y="232" font-size="4.3" font-weight="bold" text-anchor="start" fill="#333">I FRPM</text><path d="M1654.5 147.5 C1654.5 136.5 1662.5 133.5 1680.5 132.3 Q1715.0 130.5 1749.5 132.3 C1767.5 133.5 1775.5 136.5 1775.5 147.5 V156.5 C1775.5 167.5 1767.5 170.5 1749.5 171.7 Q1715.0 173.5 1680.5 171.7 C1662.5 170.5 1654.5 167.5 1654.5 156.5 Z" fill="#c8c8c8" stroke="#000" stroke-width="1.3"/><text x="1715" y="155.9" font-size="13.5" font-weight="bold" text-anchor="middle" fill="#000" >RR Tire</text><rect x="1670.5" y="172.5" width="88" height="17" fill="#c8c8c8" stroke="#000" stroke-width="1.2"/><text x="1714" y="184.8" font-size="10.5" font-weight="bold" text-anchor="middle" fill="#000" >RR Wheel</text><rect x="1665.5" y="190.5" width="96" height="45" fill="#c8c8c8" stroke="#000" stroke-width="1.2"/><text x="1713" y="217.7" font-size="13" font-weight="bold" text-anchor="middle" fill="#000" >RR Disc Assy</text><path d="M1509 151.5 L1520 140.5 H1630 L1641 151.5 L1630 162.5 H1520 Z" fill="#c8c8c8" stroke="#000" stroke-width="1.1"/><text x="1574" y="155.9" font-size="13.5" font-weight="bold" text-anchor="middle" fill="#000" >RR Wheel Torque</text><path d="M1482 219.0 L1495 211.5 H1614.5 V226.5 H1495 Z" fill="#c8c8c8" stroke="#000" stroke-width="1.1"/><text x="1547" y="223.9" font-size="13.5" font-weight="bold" text-anchor="middle" fill="#000" >RR Pad Squealer</text><text x="1630" y="197" font-size="4.3" font-weight="bold" text-anchor="end" fill="#333">RR IN PTRQ</text><text x="1630" y="208" font-size="4.3" font-weight="bold" text-anchor="end" fill="#333">RR OUT PTRQ</text><text x="1630" y="232" font-size="4.3" font-weight="bold" text-anchor="end" fill="#333">RR RPM</text><rect x="1402.5" y="239.5" width="52" height="17" fill="#c8c8c8" stroke="#000" stroke-width="1.2"/><text x="1428" y="253.0" font-size="14" font-weight="bold" text-anchor="middle" fill="#000" >RR Line</text><path d="M1372 204.0 L1383 196.5 H1462.5 V211.5 H1383 Z" fill="#c8c8c8" stroke="#000" stroke-width="1.1"/><text x="1417" y="207.8" font-size="10.5" font-weight="bold" text-anchor="middle" fill="#000" >Software</text><path d="M1371 224.0 L1380 216.5 H1455 L1464 224.0 L1455 231.5 H1380 Z" fill="#c8c8c8" stroke="#000" stroke-width="1.1"/><text x="1417" y="227.8" font-size="10.5" font-weight="bold" text-anchor="middle" fill="#000" >PCM COMM</text><rect x="910.5" y="257.5" width="77" height="33" rx="17.0" ry="17.0" fill="#c8c8c8" stroke="#000" stroke-width="1.2"/><text x="949" y="271.8" font-size="10.5" font-weight="bold" text-anchor="middle" fill="#000" >Front</text><text x="949" y="283.8" font-size="10.5" font-weight="bold" text-anchor="middle" fill="#000" >Accumulator</text><rect x="1096.5" y="257.5" width="76" height="33" rx="17.0" ry="17.0" fill="#c8c8c8" stroke="#000" stroke-width="1.2"/><text x="1134" y="271.8" font-size="10.5" font-weight="bold" text-anchor="middle" fill="#000" >Rear</text><text x="1134" y="283.8" font-size="10.5" font-weight="bold" text-anchor="middle" fill="#000" >Accumulator</text><ellipse cx="999" cy="308" rx="7" ry="7.5" fill="#c8c8c8" stroke="#000" stroke-width="1"/><path d="M989 308 L999 297 L1009 308" fill="none" stroke="#000" stroke-width="1"/><path d="M999 291 V297" fill="none" stroke="#000" stroke-width="1" transform="translate(0.5,0.5)"/><path d="M999 316 V321" fill="none" stroke="#000" stroke-width="1" transform="translate(0.5,0.5)"/><text x="985" y="311.9" font-size="13.5" font-weight="bold" text-anchor="end" fill="#000" >CKV 1</text><ellipse cx="1082" cy="308" rx="7" ry="7.5" fill="#c8c8c8" stroke="#000" stroke-width="1"/><path d="M1072 308 L1082 297 L1092 308" fill="none" stroke="#000" stroke-width="1"/><path d="M1082 291 V297" fill="none" stroke="#000" stroke-width="1" transform="translate(0.5,0.5)"/><path d="M1082 316 V321" fill="none" stroke="#000" stroke-width="1" transform="translate(0.5,0.5)"/><text x="1095" y="311.9" font-size="13.5" font-weight="bold" text-anchor="start" fill="#000" >CKV 3</text><ellipse cx="1000" cy="450" rx="7" ry="7.5" fill="#c8c8c8" stroke="#000" stroke-width="1"/><path d="M990 450 L1000 439 L1010 450" fill="none" stroke="#000" stroke-width="1"/><path d="M1000 433 V439" fill="none" stroke="#000" stroke-width="1" transform="translate(0.5,0.5)"/><path d="M1000 458 V463" fill="none" stroke="#000" stroke-width="1" transform="translate(0.5,0.5)"/><text x="988" y="453.9" font-size="13.5" font-weight="bold" text-anchor="end" fill="#000" >CKV 2</text><ellipse cx="1082" cy="447" rx="7" ry="7.5" fill="#c8c8c8" stroke="#000" stroke-width="1"/><path d="M1072 447 L1082 436 L1092 447" fill="none" stroke="#000" stroke-width="1"/><path d="M1082 430 V436" fill="none" stroke="#000" stroke-width="1" transform="translate(0.5,0.5)"/><path d="M1082 455 V460" fill="none" stroke="#000" stroke-width="1" transform="translate(0.5,0.5)"/><text x="1095" y="450.9" font-size="13.5" font-weight="bold" text-anchor="start" fill="#000" >CKV 4</text><circle cx="1000" cy="369" r="17.5" fill="#c8c8c8" stroke="#000" stroke-width="1"/><path d="M986 371 Q1000 366 1014 371 L1002 386 H998 Z" fill="#000"/><rect x="996.5" y="339.5" width="7" height="12" fill="#fff" stroke="#000" stroke-width="1"/><rect x="996.5" y="385.5" width="7" height="11" fill="#fff" stroke="#000" stroke-width="1"/><text x="999" y="366.8" font-size="10.5" font-weight="bold" text-anchor="middle" fill="#000" >Front Pump</text><path d="M1019 352 H1029 V356 H1019 Z" fill="#fff" stroke="#000" stroke-width="0.8"/><text x="1030" y="355" font-size="4.3" font-weight="bold" text-anchor="start" fill="#333">CH GND</text><text x="1028" y="370" font-size="4.3" font-weight="bold" text-anchor="start" fill="#333">H_Pump Drive Motor</text><circle cx="1083" cy="369" r="17.5" fill="#c8c8c8" stroke="#000" stroke-width="1"/><path d="M1069 371 Q1083 366 1097 371 L1085 386 H1081 Z" fill="#000"/><rect x="1079.5" y="339.5" width="7" height="12" fill="#fff" stroke="#000" stroke-width="1"/><rect x="1079.5" y="385.5" width="7" height="11" fill="#fff" stroke="#000" stroke-width="1"/><text x="1082" y="366.8" font-size="10.5" font-weight="bold" text-anchor="middle" fill="#000" >Rear Pump</text><path d="M1102 352 H1112 V356 H1102 Z" fill="#fff" stroke="#000" stroke-width="0.8"/><text x="1113" y="355" font-size="4.3" font-weight="bold" text-anchor="start" fill="#333">CH GND</text><text x="1111" y="370" font-size="4.3" font-weight="bold" text-anchor="start" fill="#333">H_Pump Drive Motor</text><rect x="934.5" y="389.5" width="34" height="32" fill="#c8c8c8" stroke="#000" stroke-width="1.2"/><circle cx="942" cy="399" r="3" fill="#fff" stroke="#000"/><circle cx="961" cy="399" r="3" fill="#fff" stroke="#000"/><circle cx="951" cy="415" r="3" fill="#fff" stroke="#000"/><path d="M942 402 L950 412" stroke="#000"/><text x="931" y="409.0" font-size="11" font-weight="normal" text-anchor="end" fill="#000" >F Pump</text><text x="928" y="420.0" font-size="11" font-weight="normal" text-anchor="end" fill="#000" >PS</text><text x="924" y="439" font-size="4.3" font-weight="bold" text-anchor="start" fill="#333">H_Pump Drive Motor</text><rect x="1123.5" y="389.5" width="34" height="32" fill="#c8c8c8" stroke="#000" stroke-width="1.2"/><circle cx="1131" cy="399" r="3" fill="#fff" stroke="#000"/><circle cx="1150" cy="399" r="3" fill="#fff" stroke="#000"/><circle cx="1140" cy="415" r="3" fill="#fff" stroke="#000"/><path d="M1150 402 L1141 412" stroke="#000"/><text x="1160" y="409.0" font-size="11" font-weight="normal" text-anchor="start" fill="#000" >R Pump</text><text x="1160" y="420.0" font-size="11" font-weight="normal" text-anchor="start" fill="#000" >PS</text><text x="1113" y="439" font-size="4.3" font-weight="bold" text-anchor="start" fill="#333">H_Pump Drive Motor</text><path d="M969 405 L972 398 L975 412 L978 398 L981 412 L984 398 L987 405" fill="none" stroke="#000" stroke-width="1"/><path d="M1095 405 L1099 398 L1103 412 L1107 398 L1111 412 L1115 398 L1119 412 L1123 405" fill="none" stroke="#000" stroke-width="1"/><path d="M987 407 V424 M1097 407 V424" stroke="#000" stroke-dasharray="2 2"/><rect x="875.5" y="330.5" width="51" height="39" fill="#c8c8c8" stroke="#000" stroke-width="1.2"/><path d="M889 330 Q901 324 913 330" fill="#c8c8c8" stroke="#000" stroke-width="0.8"/><path d="M893 340 H909 M901 333 V347" stroke="#000" stroke-width="1.1"/><path d="M876 316 V326 M923 316 V326" stroke="#000" stroke-width="2.5"/><path d="M876 316 V326 M923 316 V326" stroke="#fff" stroke-width="0.8"/><text x="865" y="314" font-size="4.3" font-weight="bold" text-anchor="start" fill="#333">CH GND</text><text x="908" y="314" font-size="4.3" font-weight="bold" text-anchor="start" fill="#333">BATT_12V</text><text x="901" y="374.8" font-size="10.5" font-weight="bold" text-anchor="middle" fill="#000" >BATTERY</text><path d="M893 433 V445" stroke="#000" stroke-width="3"/><path d="M893 433 V444" stroke="#fff" stroke-width="1"/><path d="M878 448 H910 M882 452 H906 M882 458 H906" stroke="#000" stroke-width="1.2"/><text x="882" y="434" font-size="4.3" font-weight="bold" text-anchor="start" fill="#333">CH GND</text><text x="894" y="475.0" font-size="11" font-weight="normal" text-anchor="middle" fill="#000" >CH GND</text><rect x="963.5" y="476.5" width="75" height="35" fill="#c8c8c8" stroke="#000" stroke-width="1.2"/><text x="1001" y="492.8" font-size="10.5" font-weight="bold" text-anchor="middle" fill="#000" >Front Damper</text><text x="1001" y="504.8" font-size="10.5" font-weight="bold" text-anchor="middle" fill="#000" >Chamber</text><rect x="1044.5" y="476.5" width="75" height="35" fill="#c8c8c8" stroke="#000" stroke-width="1.2"/><text x="1082" y="492.8" font-size="10.5" font-weight="bold" text-anchor="middle" fill="#000" >Rear Damper</text><text x="1082" y="504.8" font-size="10.5" font-weight="bold" text-anchor="middle" fill="#000" >Chamber</text><text x="1126" y="536.8" font-size="10.5" font-weight="normal" text-anchor="middle" fill="#000" >BF Level Sensor</text><rect x="1110.5" y="539.5" width="32" height="18" fill="#d0d0d0" stroke="#000" stroke-width="0.1"/><circle cx="1115" cy="546" r="2.5" fill="#fff" stroke="#000"/><circle cx="1138" cy="546" r="2.5" fill="#fff" stroke="#000"/><path d="M1112 538 H1141 M1126 538 V557 L1133 553 H1126" stroke="#000" fill="none"/><rect x="881.5" y="572.5" width="52" height="17" fill="#c8c8c8" stroke="#000" stroke-width="1.2"/><text x="907" y="586.0" font-size="14" font-weight="bold" text-anchor="middle" fill="#000" >FS Line</text><path d="M966.5 567.5 H1000 L1008 574.5 L1000 581.5 H966.5 Z" fill="#c8c8c8" stroke="#000" stroke-width="1.1"/><text x="984" y="578.1" font-size="8.5" font-weight="bold" text-anchor="middle" fill="#000" >Fluid Fill</text><text x="1123" y="580.2" font-size="9" font-weight="normal" text-anchor="middle" fill="#000" >Brake Light SW</text><path d="M1115 581 l3 -3 l3 3 l-3 3 z M1137 581 l3 -3 l3 3 l-3 3 z" fill="#c8c8c8" stroke="#000" stroke-width="0.8"/><path d="M1116 588.5 H1143 M1130.5 588 V609" stroke="#000"/><rect x="1001.5" y="590.5" width="44" height="12" fill="#c8c8c8" stroke="#000" stroke-width="1.2"/><text x="1023" y="598.7" font-size="7.5" font-weight="bold" text-anchor="middle" fill="#000" >Brake Fluid</text><rect x="997.5" y="602.5" width="52" height="18" fill="#c8c8c8" stroke="#000" stroke-width="1.2"/><text x="1023" y="614.1" font-size="8.5" font-weight="bold" text-anchor="middle" fill="#000" >Reservior</text><rect x="1011.5" y="620.5" width="33" height="11" fill="#c8c8c8" stroke="#000" stroke-width="1.2"/><rect x="999.5" y="631.5" width="51" height="16" fill="#c8c8c8" stroke="#000" stroke-width="1.2"/><path d="M1051 621 L1055 612 H1066 V667 H1055 L1051 658 Z" fill="#c8c8c8" stroke="#000"/><rect x="1066.5" y="630.5" width="4" height="20" fill="#c8c8c8" stroke="#000" stroke-width="1.2"/><rect x="1071.5" y="632.5" width="24" height="15" fill="#c8c8c8" stroke="#000" stroke-width="1.2"/><rect x="1110.5" y="631.5" width="6" height="16" fill="#c8c8c8" stroke="#000" stroke-width="1.2"/><text x="1018" y="655.8" font-size="10.5" font-weight="bold" text-anchor="middle" fill="#000" >Master</text><text x="1018" y="667.8" font-size="10.5" font-weight="bold" text-anchor="middle" fill="#000" >Cylinder</text><path d="M1118 620 L1124 622 L1135 632 L1137 650 L1142 676 L1150 683 L1147 692 L1140 690 L1130 678 L1126 650 L1117 628 Z" fill="#c8c8c8" stroke="#000" stroke-width="1"/><path d="M1145 679 L1152 676 L1158 692 L1151 694 Z" fill="#c8c8c8" stroke="#000"/><text x="1158" y="653.7" font-size="13" font-weight="bold" text-anchor="middle" fill="#000" >Brake</text><text x="1158" y="668.7" font-size="13" font-weight="bold" text-anchor="middle" fill="#000" >Pedal</text><path d="M1152 682.5 L1169 675.5 H1249.5 V689.5 H1169 Z" fill="#c8c8c8" stroke="#000" stroke-width="1.1"/><text x="1204" y="685.8" font-size="10.5" font-weight="bold" text-anchor="middle" fill="#000" >Foot Pressure</text><rect x="1308.5" y="266.5" width="62" height="267" fill="#c8c8c8" stroke="#000" stroke-width="1.2"/><text x="1339" y="406.8" font-size="19" font-weight="bold" text-anchor="middle" fill="#000" >ECU</text><rect x="1214.5" y="283.5" width="79" height="29" fill="#c8c8c8" stroke="#000" stroke-width="1.2"/><text x="1254" y="301.5" font-size="9.8" font-weight="bold" text-anchor="middle" fill="#000" >SENS CONN 2A</text><rect x="1214.5" y="496.5" width="79" height="27" fill="#c8c8c8" stroke="#000" stroke-width="1.2"/><text x="1254" y="513.5" font-size="9.8" font-weight="bold" text-anchor="middle" fill="#000" >SENS CONN 1A</text><rect x="1397.5" y="268.5" width="84" height="34" fill="#c8c8c8" stroke="#000" stroke-width="1.2"/><text x="1439" y="288.8" font-size="10.5" font-weight="bold" text-anchor="middle" fill="#000" >DIAG CONN</text><path d="M1508 277.5 L1521 270.5 H1607.5 V284.5 H1521 Z" fill="#c8c8c8" stroke="#000" stroke-width="1.1"/><text x="1563" y="280.8" font-size="10.5" font-weight="bold" text-anchor="middle" fill="#000" >Mechanic L test</text><path d="M1510 295.5 L1523 288.5 H1609.5 V302.5 H1523 Z" fill="#c8c8c8" stroke="#000" stroke-width="1.1"/><text x="1565" y="298.8" font-size="10.5" font-weight="bold" text-anchor="middle" fill="#000" >Mechanic K Test</text><path d="M1335 534 V547 H1341 V543" fill="none" stroke="#000" stroke-width="1.5"/><text x="1198" y="299" font-size="4.3" font-weight="bold" text-anchor="end" fill="#333">RR RPM</text><text x="1198" y="314" font-size="4.3" font-weight="bold" text-anchor="end" fill="#333">I FRPM</text><text x="1198" y="509" font-size="4.3" font-weight="bold" text-anchor="end" fill="#333">LR RPM</text><text x="1198" y="524" font-size="4.3" font-weight="bold" text-anchor="end" fill="#333">I FRPM</text><text x="1296" y="333" font-size="4.3" font-weight="bold" text-anchor="end" fill="#333">RFIN PTRQ</text><text x="1296" y="344" font-size="4.3" font-weight="bold" text-anchor="end" fill="#333">RFOUT PTRQ</text><text x="1296" y="354" font-size="4.3" font-weight="bold" text-anchor="end" fill="#333">RR IN PTRQ</text><text x="1296" y="365" font-size="4.3" font-weight="bold" text-anchor="end" fill="#333">RR OUT PTRQ</text><text x="1296" y="442" font-size="4.3" font-weight="bold" text-anchor="end" fill="#333">RFIN PTRQ</text><text x="1296" y="453" font-size="4.3" font-weight="bold" text-anchor="end" fill="#333">RFOUT PTRQ</text><text x="1296" y="464" font-size="4.3" font-weight="bold" text-anchor="end" fill="#333">RR IN PTRQ</text><text x="1296" y="475" font-size="4.3" font-weight="bold" text-anchor="end" fill="#333">RR OUT PTRQ</text><text x="1383" y="308" font-size="4.3" font-weight="bold" text-anchor="start" fill="#333">H_Pump Drive Motor</text><text x="1445" y="348" font-size="4.3" font-weight="bold" text-anchor="start" fill="#333">H_Pump Drive Motor</text><path d="M1508 355 c-5 0 -5 7.5 0 7.5 c-5 0 -5 7.5 0 7.5 c-5 0 -5 7.5 0 7.5 c-5 0 -5 7.5 0 7.5 c-5 0 -5 7.5 0 7.5 c-5 0 -5 7.5 0 7.5 " fill="none" stroke="#000" stroke-width="1"/><path d="M1508 355 H1515 M1508 362 H1513 M1508 370 H1513 M1508 377 H1517 M1508 385 H1513 M1508 392 H1513 M1508 400 H1515" stroke="#000" stroke-width="1"/><text x="1518" y="374.8" font-size="10.5" font-weight="normal" text-anchor="start" fill="#000" >Pump</text><text x="1518" y="385.8" font-size="10.5" font-weight="normal" text-anchor="start" fill="#000" >Relay</text><text x="1462" y="375.8" font-size="10.5" font-weight="normal" text-anchor="end" fill="#000" >Pump Relay</text><text x="1462" y="386.8" font-size="10.5" font-weight="normal" text-anchor="end" fill="#000" >Contact</text><circle cx="1473" cy="366" r="3" fill="#c8c8c8" stroke="#000" stroke-width="0.8"/><circle cx="1473" cy="387" r="3" fill="#c8c8c8" stroke="#000" stroke-width="0.8"/><path d="M1466 389 L1474 368" stroke="#000"/><path d="M1508 453 c-5 0 -5 7 0 7 c-5 0 -5 7 0 7 c-5 0 -5 7 0 7 c-5 0 -5 7 0 7 c-5 0 -5 7 0 7 c-5 0 -5 7 0 7 " fill="none" stroke="#000" stroke-width="1"/><path d="M1508 453 H1515 M1508 460 H1513 M1508 467 H1513 M1508 474 H1517 M1508 481 H1513 M1508 488 H1513 M1508 495 H1515" stroke="#000" stroke-width="1"/><text x="1519" y="471.8" font-size="10.5" font-weight="normal" text-anchor="start" fill="#000" >Solenoid</text><text x="1518" y="483.8" font-size="10.5" font-weight="normal" text-anchor="start" fill="#000" >Relay Coil</text><text x="1462" y="464.8" font-size="10.5" font-weight="normal" text-anchor="end" fill="#000" >Solenoid Relay</text><text x="1462" y="475.8" font-size="10.5" font-weight="normal" text-anchor="end" fill="#000" >Contacts</text><circle cx="1471" cy="461" r="3" fill="#c8c8c8" stroke="#000" stroke-width="0.8"/><circle cx="1458" cy="484" r="3" fill="#c8c8c8" stroke="#000" stroke-width="0.8"/><circle cx="1483" cy="484" r="3" fill="#c8c8c8" stroke="#000" stroke-width="0.8"/><path d="M1460 481 L1470 464" stroke="#000"/><path d="M1457 491 V500 H1461 V503 H1455 Z" fill="#fff" stroke="#000" stroke-width="0.8"/><text x="1450" y="505" font-size="4.3" font-weight="bold" text-anchor="start" fill="#333">CH GND</text><text x="1474" y="505" font-size="4.3" font-weight="bold" text-anchor="start" fill="#333">IGN SW</text><circle cx="1562" cy="435" r="10.5" fill="#c8c8c8" stroke="#000" stroke-width="1"/><path d="M1552 435 H1563 L1570 429 M1563 435 L1570 441 M1570 428 V442 M1571 432 L1574 437" stroke="#000" fill="none"/><text x="1562" y="451.8" font-size="10.5" font-weight="normal" text-anchor="middle" fill="#000" >D1</text><path d="M1635.5 359 V344 C1635.5 335 1642 331.5 1649.5 331.5 C1657 331.5 1663.5 335 1663.5 344 V359 Z" fill="#c8c8c8" stroke="#000" stroke-width="1.1"/><path d="M1643 365 V347 H1647 M1656 362 V347 H1653" stroke="#000" fill="none" stroke-width="1"/><path d="M1645 342 L1653 346 L1645 350 Z" fill="#fff" stroke="#000" stroke-width="1"/><path d="M1653 341 V351" stroke="#000"/><path d="M1654 363 V371 H1658 V376 H1652 Z" fill="#fff" stroke="#000" stroke-width="0.9"/><text x="1650" y="330.8" font-size="10.5" font-weight="normal" text-anchor="middle" fill="#000" >Brake Fluid LED</text><path d="M1748.9 344.8 L1761.0 343.8 L1749.1 341.7 Z M1748.1 346.3 L1759.9 349.1 L1749.2 343.3 Z M1746.9 347.4 L1757.2 353.7 L1748.9 344.9 Z M1745.4 348.1 L1753.3 357.2 L1748.1 346.3 Z M1743.8 348.2 L1748.4 359.4 L1746.8 347.4 Z M1742.2 347.9 L1743.2 360.0 L1745.3 348.1 Z M1740.7 347.1 L1737.9 358.9 L1743.7 348.2 Z M1739.6 345.9 L1733.3 356.2 L1742.1 347.9 Z M1738.9 344.4 L1729.8 352.3 L1740.7 347.1 Z M1738.8 342.8 L1727.6 347.4 L1739.6 345.8 Z M1739.1 341.2 L1727.0 342.2 L1738.9 344.3 Z M1739.9 339.7 L1728.1 336.9 L1738.8 342.7 Z M1741.1 338.6 L1730.8 332.3 L1739.1 341.1 Z M1742.6 337.9 L1734.7 328.8 L1739.9 339.7 Z M1744.2 337.8 L1739.6 326.6 L1741.2 338.6 Z M1745.8 338.1 L1744.8 326.0 L1742.7 337.9 Z M1747.3 338.9 L1750.1 327.1 L1744.3 337.8 Z M1748.4 340.1 L1754.7 329.8 L1745.9 338.1 Z M1749.1 341.6 L1758.2 333.7 L1747.3 338.9 Z M1749.2 343.2 L1760.4 338.6 L1748.4 340.2 Z" fill="#f07a7a" opacity="0.9"/><path d="M1736.5 339 C1736.5 331 1751.5 331 1751.5 339 C1751.5 344 1748.5 346 1747.5 350 H1740.5 C1739.5 346 1736.5 344 1736.5 339 Z" fill="#f4a070" stroke="#5a3020" stroke-width="0.9"/><ellipse cx="1744" cy="338" rx="3.5" ry="3.5" fill="#f0e070" opacity="0.8"/><path d="M1743 335 L1745 339 L1743 342 L1746 347" stroke="#b03020" fill="none" stroke-width="1"/><rect x="1738.5" y="350" width="11" height="7.5" rx="2" fill="#2a2e30"/><path d="M1738.5 352.5 h11 M1738.5 355 h11" stroke="#707070" stroke-width="0.7"/><path d="M1635.5 421 V406 C1635.5 397 1642 393.5 1649.5 393.5 C1657 393.5 1663.5 397 1663.5 406 V421 Z" fill="#c8c8c8" stroke="#000" stroke-width="1.1"/><path d="M1643 427 V409 H1647 M1656 424 V409 H1653" stroke="#000" fill="none" stroke-width="1"/><path d="M1645 404 L1653 408 L1645 412 Z" fill="#fff" stroke="#000" stroke-width="1"/><path d="M1653 403 V413" stroke="#000"/><path d="M1654 425 V433 H1658 V438 H1652 Z" fill="#fff" stroke="#000" stroke-width="0.9"/><text x="1647" y="392.8" font-size="10.5" font-weight="normal" text-anchor="middle" fill="#000" >ABS LED</text><text x="1745" y="391.8" font-size="10.5" font-weight="normal" text-anchor="middle" fill="#000" >ABS LED Light</text><path d="M1748.9 410.8 L1761.0 409.8 L1749.1 407.7 Z M1748.1 412.3 L1759.9 415.1 L1749.2 409.3 Z M1746.9 413.4 L1757.2 419.7 L1748.9 410.9 Z M1745.4 414.1 L1753.3 423.2 L1748.1 412.3 Z M1743.8 414.2 L1748.4 425.4 L1746.8 413.4 Z M1742.2 413.9 L1743.2 426.0 L1745.3 414.1 Z M1740.7 413.1 L1737.9 424.9 L1743.7 414.2 Z M1739.6 411.9 L1733.3 422.2 L1742.1 413.9 Z M1738.9 410.4 L1729.8 418.3 L1740.7 413.1 Z M1738.8 408.8 L1727.6 413.4 L1739.6 411.8 Z M1739.1 407.2 L1727.0 408.2 L1738.9 410.3 Z M1739.9 405.7 L1728.1 402.9 L1738.8 408.7 Z M1741.1 404.6 L1730.8 398.3 L1739.1 407.1 Z M1742.6 403.9 L1734.7 394.8 L1739.9 405.7 Z M1744.2 403.8 L1739.6 392.6 L1741.2 404.6 Z M1745.8 404.1 L1744.8 392.0 L1742.7 403.9 Z M1747.3 404.9 L1750.1 393.1 L1744.3 403.8 Z M1748.4 406.1 L1754.7 395.8 L1745.9 404.1 Z M1749.1 407.6 L1758.2 399.7 L1747.3 404.9 Z M1749.2 409.2 L1760.4 404.6 L1748.4 406.2 Z" fill="#f07a7a" opacity="0.9"/><path d="M1736.5 405 C1736.5 397 1751.5 397 1751.5 405 C1751.5 410 1748.5 412 1747.5 416 H1740.5 C1739.5 412 1736.5 410 1736.5 405 Z" fill="#f4a070" stroke="#5a3020" stroke-width="0.9"/><ellipse cx="1744" cy="404" rx="3.5" ry="3.5" fill="#f0e070" opacity="0.8"/><path d="M1743 401 L1745 405 L1743 408 L1746 413" stroke="#b03020" fill="none" stroke-width="1"/><rect x="1738.5" y="416" width="11" height="7.5" rx="2" fill="#2a2e30"/><path d="M1738.5 418.5 h11 M1738.5 421 h11" stroke="#707070" stroke-width="0.7"/><path d="M1635.5 489 V474 C1635.5 465 1642 461.5 1649.5 461.5 C1657 461.5 1663.5 465 1663.5 474 V489 Z" fill="#c8c8c8" stroke="#000" stroke-width="1.1"/><path d="M1643 495 V477 H1647 M1656 492 V477 H1653" stroke="#000" fill="none" stroke-width="1"/><path d="M1645 472 L1653 476 L1645 480 Z" fill="#fff" stroke="#000" stroke-width="1"/><path d="M1653 471 V481" stroke="#000"/><path d="M1654 493 V501 H1658 V506 H1652 Z" fill="#fff" stroke="#000" stroke-width="0.9"/><text x="1647" y="460.8" font-size="10.5" font-weight="normal" text-anchor="middle" fill="#000" >R Brake Bulb</text><text x="1745" y="459.8" font-size="10.5" font-weight="normal" text-anchor="middle" fill="#000" >R Brake Light</text><path d="M1748.9 477.8 L1761.0 476.8 L1749.1 474.7 Z M1748.1 479.3 L1759.9 482.1 L1749.2 476.3 Z M1746.9 480.4 L1757.2 486.7 L1748.9 477.9 Z M1745.4 481.1 L1753.3 490.2 L1748.1 479.3 Z M1743.8 481.2 L1748.4 492.4 L1746.8 480.4 Z M1742.2 480.9 L1743.2 493.0 L1745.3 481.1 Z M1740.7 480.1 L1737.9 491.9 L1743.7 481.2 Z M1739.6 478.9 L1733.3 489.2 L1742.1 480.9 Z M1738.9 477.4 L1729.8 485.3 L1740.7 480.1 Z M1738.8 475.8 L1727.6 480.4 L1739.6 478.8 Z M1739.1 474.2 L1727.0 475.2 L1738.9 477.3 Z M1739.9 472.7 L1728.1 469.9 L1738.8 475.7 Z M1741.1 471.6 L1730.8 465.3 L1739.1 474.1 Z M1742.6 470.9 L1734.7 461.8 L1739.9 472.7 Z M1744.2 470.8 L1739.6 459.6 L1741.2 471.6 Z M1745.8 471.1 L1744.8 459.0 L1742.7 470.9 Z M1747.3 471.9 L1750.1 460.1 L1744.3 470.8 Z M1748.4 473.1 L1754.7 462.8 L1745.9 471.1 Z M1749.1 474.6 L1758.2 466.7 L1747.3 471.9 Z M1749.2 476.2 L1760.4 471.6 L1748.4 473.2 Z" fill="#f07a7a" opacity="0.9"/><path d="M1736.5 472 C1736.5 464 1751.5 464 1751.5 472 C1751.5 477 1748.5 479 1747.5 483 H1740.5 C1739.5 479 1736.5 477 1736.5 472 Z" fill="#f4a070" stroke="#5a3020" stroke-width="0.9"/><ellipse cx="1744" cy="471" rx="3.5" ry="3.5" fill="#f0e070" opacity="0.8"/><path d="M1743 468 L1745 472 L1743 475 L1746 480" stroke="#b03020" fill="none" stroke-width="1"/><rect x="1738.5" y="483" width="11" height="7.5" rx="2" fill="#2a2e30"/><path d="M1738.5 485.5 h11 M1738.5 488 h11" stroke="#707070" stroke-width="0.7"/><path d="M1635.5 557 V542 C1635.5 533 1642 529.5 1649.5 529.5 C1657 529.5 1663.5 533 1663.5 542 V557 Z" fill="#c8c8c8" stroke="#000" stroke-width="1.1"/><path d="M1643 563 V545 H1647 M1656 560 V545 H1653" stroke="#000" fill="none" stroke-width="1"/><path d="M1645 540 L1653 544 L1645 548 Z" fill="#fff" stroke="#000" stroke-width="1"/><path d="M1653 539 V549" stroke="#000"/><path d="M1654 561 V569 H1658 V574 H1652 Z" fill="#fff" stroke="#000" stroke-width="0.9"/><text x="1646" y="528.8" font-size="10.5" font-weight="normal" text-anchor="middle" fill="#000" >RW Brake Bulb</text><text x="1745" y="526.8" font-size="10.5" font-weight="normal" text-anchor="middle" fill="#000" >RW Brake Light</text><path d="M1748.9 545.8 L1761.0 544.8 L1749.1 542.7 Z M1748.1 547.3 L1759.9 550.1 L1749.2 544.3 Z M1746.9 548.4 L1757.2 554.7 L1748.9 545.9 Z M1745.4 549.1 L1753.3 558.2 L1748.1 547.3 Z M1743.8 549.2 L1748.4 560.4 L1746.8 548.4 Z M1742.2 548.9 L1743.2 561.0 L1745.3 549.1 Z M1740.7 548.1 L1737.9 559.9 L1743.7 549.2 Z M1739.6 546.9 L1733.3 557.2 L1742.1 548.9 Z M1738.9 545.4 L1729.8 553.3 L1740.7 548.1 Z M1738.8 543.8 L1727.6 548.4 L1739.6 546.8 Z M1739.1 542.2 L1727.0 543.2 L1738.9 545.3 Z M1739.9 540.7 L1728.1 537.9 L1738.8 543.7 Z M1741.1 539.6 L1730.8 533.3 L1739.1 542.1 Z M1742.6 538.9 L1734.7 529.8 L1739.9 540.7 Z M1744.2 538.8 L1739.6 527.6 L1741.2 539.6 Z M1745.8 539.1 L1744.8 527.0 L1742.7 538.9 Z M1747.3 539.9 L1750.1 528.1 L1744.3 538.8 Z M1748.4 541.1 L1754.7 530.8 L1745.9 539.1 Z M1749.1 542.6 L1758.2 534.7 L1747.3 539.9 Z M1749.2 544.2 L1760.4 539.6 L1748.4 541.2 Z" fill="#f07a7a" opacity="0.9"/><path d="M1736.5 540 C1736.5 532 1751.5 532 1751.5 540 C1751.5 545 1748.5 547 1747.5 551 H1740.5 C1739.5 547 1736.5 545 1736.5 540 Z" fill="#f4a070" stroke="#5a3020" stroke-width="0.9"/><ellipse cx="1744" cy="539" rx="3.5" ry="3.5" fill="#f0e070" opacity="0.8"/><path d="M1743 536 L1745 540 L1743 543 L1746 548" stroke="#b03020" fill="none" stroke-width="1"/><rect x="1738.5" y="551" width="11" height="7.5" rx="2" fill="#2a2e30"/><path d="M1738.5 553.5 h11 M1738.5 556 h11" stroke="#707070" stroke-width="0.7"/><path d="M1635.5 625 V610 C1635.5 601 1642 597.5 1649.5 597.5 C1657 597.5 1663.5 601 1663.5 610 V625 Z" fill="#c8c8c8" stroke="#000" stroke-width="1.1"/><path d="M1643 631 V613 H1647 M1656 628 V613 H1653" stroke="#000" fill="none" stroke-width="1"/><path d="M1645 608 L1653 612 L1645 616 Z" fill="#fff" stroke="#000" stroke-width="1"/><path d="M1653 607 V617" stroke="#000"/><path d="M1654 629 V637 H1658 V642 H1652 Z" fill="#fff" stroke="#000" stroke-width="0.9"/><text x="1646" y="596.8" font-size="10.5" font-weight="normal" text-anchor="middle" fill="#000" >L Brake Bulb</text><text x="1745" y="594.8" font-size="10.5" font-weight="normal" text-anchor="middle" fill="#000" >L Brake Light</text><path d="M1748.9 613.8 L1761.0 612.8 L1749.1 610.7 Z M1748.1 615.3 L1759.9 618.1 L1749.2 612.3 Z M1746.9 616.4 L1757.2 622.7 L1748.9 613.9 Z M1745.4 617.1 L1753.3 626.2 L1748.1 615.3 Z M1743.8 617.2 L1748.4 628.4 L1746.8 616.4 Z M1742.2 616.9 L1743.2 629.0 L1745.3 617.1 Z M1740.7 616.1 L1737.9 627.9 L1743.7 617.2 Z M1739.6 614.9 L1733.3 625.2 L1742.1 616.9 Z M1738.9 613.4 L1729.8 621.3 L1740.7 616.1 Z M1738.8 611.8 L1727.6 616.4 L1739.6 614.8 Z M1739.1 610.2 L1727.0 611.2 L1738.9 613.3 Z M1739.9 608.7 L1728.1 605.9 L1738.8 611.7 Z M1741.1 607.6 L1730.8 601.3 L1739.1 610.1 Z M1742.6 606.9 L1734.7 597.8 L1739.9 608.7 Z M1744.2 606.8 L1739.6 595.6 L1741.2 607.6 Z M1745.8 607.1 L1744.8 595.0 L1742.7 606.9 Z M1747.3 607.9 L1750.1 596.1 L1744.3 606.8 Z M1748.4 609.1 L1754.7 598.8 L1745.9 607.1 Z M1749.1 610.6 L1758.2 602.7 L1747.3 607.9 Z M1749.2 612.2 L1760.4 607.6 L1748.4 609.2 Z" fill="#f07a7a" opacity="0.9"/><path d="M1736.5 608 C1736.5 600 1751.5 600 1751.5 608 C1751.5 613 1748.5 615 1747.5 619 H1740.5 C1739.5 615 1736.5 613 1736.5 608 Z" fill="#f4a070" stroke="#5a3020" stroke-width="0.9"/><ellipse cx="1744" cy="607" rx="3.5" ry="3.5" fill="#f0e070" opacity="0.8"/><path d="M1743 604 L1745 608 L1743 611 L1746 616" stroke="#b03020" fill="none" stroke-width="1"/><rect x="1738.5" y="619" width="11" height="7.5" rx="2" fill="#2a2e30"/><path d="M1738.5 621.5 h11 M1738.5 624 h11" stroke="#707070" stroke-width="0.7"/><text x="1746" y="319.8" font-size="10.5" font-weight="normal" text-anchor="middle" fill="#000" >Brake Fluid</text><text x="1746" y="330.8" font-size="10.5" font-weight="normal" text-anchor="middle" fill="#000" >LED Light</text><path d="M1300 585 H1309 V590 H1300 Z" fill="#fff" stroke="#000" stroke-width="0.8"/><circle cx="1317" cy="587" r="4.5" fill="#c8c8c8" stroke="#000" stroke-width="0.8"/><circle cx="1342" cy="587" r="4.5" fill="#c8c8c8" stroke="#000" stroke-width="0.8"/><path d="M1322 587 H1337 M1328 591 L1332 583 M1330 591 L1334 583" stroke="#000" stroke-width="0.8"/><text x="1330" y="602.2" font-size="9" font-weight="normal" text-anchor="middle" fill="#000" >Fuse</text><text x="1285" y="590" font-size="4.3" font-weight="bold" text-anchor="start" fill="#333">BATT_12V</text><text x="1415" y="571.1" font-size="8.5" font-weight="normal" text-anchor="middle" fill="#000" >Ignition</text><text x="1415" y="581.1" font-size="8.5" font-weight="normal" text-anchor="middle" fill="#000" >Switch</text><circle cx="1404" cy="588" r="3" fill="#c8c8c8" stroke="#000" stroke-width="0.8"/><circle cx="1425" cy="588" r="3" fill="#c8c8c8" stroke="#000" stroke-width="0.8"/><path d="M1397 588 H1401 M1428 588 H1432 M1406 587 L1423 580" stroke="#000"/><text x="1437" y="590" font-size="4.3" font-weight="bold" text-anchor="start" fill="#333">IGN SW</text><path d="M1484 601 L1491 599 L1488 596 L1494 597 L1493 594 L1499 597 L1504 598 Q1511 603 1512 612 Q1512 620 1505 622 Q1498 623 1494 618 L1487 614 L1492 613 L1484 609 L1490 608 L1483 604 Z" fill="#d9a07a" stroke="#9a6a4a" stroke-width="0.6"/><path d="M1492 601 L1500 604 M1494 605 L1502 608 M1492 609 L1500 612" stroke="#8a5a3a" stroke-width="0.8"/><text x="1512" y="615.8" font-size="10.5" font-weight="normal" text-anchor="start" fill="#000" >Driver Ignition</text><rect x="1437.5" y="644.5" width="53" height="16" fill="#c8c8c8" stroke="#000" stroke-width="1.2"/><text x="1464" y="657.0" font-size="14" font-weight="bold" text-anchor="middle" fill="#000" >RS Line</text><rect x="1665.5" y="668.5" width="96" height="44" fill="#c8c8c8" stroke="#000" stroke-width="1.2"/><text x="1713" y="695.7" font-size="13" font-weight="bold" text-anchor="middle" fill="#000" >LR Disc Assy</text><rect x="1670.5" y="715.5" width="88" height="16" fill="#c8c8c8" stroke="#000" stroke-width="1.2"/><text x="1714" y="726.8" font-size="10.5" font-weight="bold" text-anchor="middle" fill="#000" >LR Wheel</text><path d="M1654.5 749.5 C1654.5 738.5 1662.5 735.5 1680.5 734.3 Q1715.0 732.5 1749.5 734.3 C1767.5 735.5 1775.5 738.5 1775.5 749.5 V757.5 C1775.5 768.5 1767.5 771.5 1749.5 772.7 Q1715.0 774.5 1680.5 772.7 C1662.5 771.5 1654.5 768.5 1654.5 757.5 Z" fill="#c8c8c8" stroke="#000" stroke-width="1.3"/><text x="1715" y="757.9" font-size="13.5" font-weight="bold" text-anchor="middle" fill="#000" >LR Tire</text><path d="M1485 697.5 L1500 690.5 H1618.5 V704.5 H1500 Z" fill="#c8c8c8" stroke="#000" stroke-width="1.1"/><text x="1553" y="701.9" font-size="13.5" font-weight="bold" text-anchor="middle" fill="#000" >LR Pad Squealer</text><path d="M1499 755.0 L1510 744.5 H1621 L1632 755.0 L1621 765.5 H1510 Z" fill="#c8c8c8" stroke="#000" stroke-width="1.1"/><text x="1565" y="759.9" font-size="13.5" font-weight="bold" text-anchor="middle" fill="#000" >LR Wheel Torque</text><text x="1655" y="678" font-size="4.3" font-weight="bold" text-anchor="end" fill="#333">I R RPM</text><text x="1655" y="688" font-size="4.3" font-weight="bold" text-anchor="end" fill="#333">I R OUT PTRQ</text><text x="1655" y="710" font-size="4.3" font-weight="bold" text-anchor="end" fill="#333">I R IN PTRQ</text><path d="M898.5 690.5 H1004 L1019 697.5 L1004 704.5 H898.5 Z" fill="#c8c8c8" stroke="#000" stroke-width="1.1"/><text x="957" y="701.9" font-size="13.5" font-weight="bold" text-anchor="middle" fill="#000" >LF Pad Squealer</text><path d="M893 754.5 L904 744.5 H1015 L1026 754.5 L1015 764.5 H904 Z" fill="#c8c8c8" stroke="#000" stroke-width="1.1"/><text x="959" y="759.9" font-size="13.5" font-weight="bold" text-anchor="middle" fill="#000" >LF Wheel Torque</text><rect x="840.5" y="668.5" width="35" height="44" fill="#c8c8c8" stroke="#000" stroke-width="1.2"/><rect x="840.5" y="715.5" width="31" height="16" fill="#c8c8c8" stroke="#000" stroke-width="1.2"/><path d="M820.5 749.5 C820.5 738.5 828.5 735.5 846.5 734.3 Q854.0 732.5 861.5 734.3 C879.5 735.5 887.5 738.5 887.5 749.5 V757.5 C887.5 768.5 879.5 771.5 861.5 772.7 Q854.0 774.5 846.5 772.7 C828.5 771.5 820.5 768.5 820.5 757.5 Z" fill="#c8c8c8" stroke="#000" stroke-width="1.3"/><text x="885" y="675" font-size="4.3" font-weight="bold" text-anchor="start" fill="#333">I FRPM</text><text x="885" y="686" font-size="4.3" font-weight="bold" text-anchor="start" fill="#333">I FOUT PTRQ</text><text x="885" y="710" font-size="4.3" font-weight="bold" text-anchor="start" fill="#333">I FIN PTRQ</text></svg><div style="position:absolute;left:1887px;top:98px;width:17px;height:695px;background:#f4f4f4;"></div><div style="position:absolute;left:1887px;top:98px;width:17px;height:17px;background:#f0f0f0;box-sizing:border-box;border-top:1px solid #fff;border-left:1px solid #fff;border-right:1px solid #696969;border-bottom:1px solid #696969;box-shadow:inset -1px -1px 0 #a0a0a0;"></div><svg style="position:absolute;left:1887px;top:98px;" width="17" height="17" viewBox="0 0 17 17"><path d="M4.5 10 L8.5 6 L12.5 10 Z" fill="#000"/></svg><div style="position:absolute;left:1887px;top:232px;width:17px;height:261px;background:#f0f0f0;box-sizing:border-box;border-top:1px solid #fff;border-left:1px solid #fff;border-right:1px solid #696969;border-bottom:1px solid #696969;box-shadow:inset -1px -1px 0 #a0a0a0;"></div><div style="position:absolute;left:1887px;top:776px;width:17px;height:17px;background:#f0f0f0;box-sizing:border-box;border-top:1px solid #fff;border-left:1px solid #fff;border-right:1px solid #696969;border-bottom:1px solid #696969;box-shadow:inset -1px -1px 0 #a0a0a0;"></div><svg style="position:absolute;left:1887px;top:776px;" width="17" height="17" viewBox="0 0 17 17"><path d="M4.5 7 L8.5 11 L12.5 7 Z" fill="#000"/></svg><div style="position:absolute;left:757px;top:793px;width:1147px;height:17px;background:#f4f4f4;"></div><div style="position:absolute;left:975px;top:793px;width:460px;height:17px;background:#f0f0f0;box-sizing:border-box;border-top:1px solid #fff;border-left:1px solid #fff;border-right:1px solid #696969;border-bottom:1px solid #696969;box-shadow:inset -1px -1px 0 #a0a0a0;"></div><div style="position:absolute;left:1869px;top:793px;width:17px;height:17px;background:#f0f0f0;box-sizing:border-box;border-top:1px solid #fff;border-left:1px solid #fff;border-right:1px solid #696969;border-bottom:1px solid #696969;box-shadow:inset -1px -1px 0 #a0a0a0;"></div><svg style="position:absolute;left:1869px;top:793px;" width="17" height="17" viewBox="0 0 17 17"><path d="M7 4.5 L11 8.5 L7 12.5 Z" fill="#000"/></svg><div style="position:absolute;left:1887px;top:793px;width:17px;height:17px;background:#f0f0f0;"></div><div style="position:absolute;left:755px;top:811px;width:1153px;height:209px;background:#f0f0f0;"></div><div style="position:absolute;left:755px;top:815px;width:1150px;height:1px;background:#a0a0a0;"></div><div style="position:absolute;left:755px;top:816px;width:1150px;height:1px;background:#fff;"></div><div style="position:absolute;left:755px;top:811px;width:1px;height:209px;background:#646464;"></div><div style="position:absolute;left:756px;top:811px;width:1px;height:208px;background:#a0a0a0;"></div><div style="position:absolute;left:755px;top:1018px;width:1150px;height:1px;background:#fff;"></div><div class="t" style="left:862px;top:823px;font-size:11.5px;color:#000;font-weight:normal;letter-spacing:-0.45px">Detection Statistics</div><div style="position:absolute;left:958px;top:819px;width:1px;height:19px;background:#fff;"></div><div style="position:absolute;left:959px;top:819px;width:1px;height:19px;background:#a0a0a0;"></div><div style="position:absolute;left:960px;top:819px;width:1px;height:19px;background:#696969;"></div><div class="t" style="left:965px;top:823px;font-size:11.5px;color:#000;font-weight:normal;letter-spacing:-0.45px">Isolation Statistics</div><div style="position:absolute;left:1055px;top:819px;width:1px;height:19px;background:#fff;"></div><div style="position:absolute;left:1056px;top:819px;width:1px;height:19px;background:#a0a0a0;"></div><div style="position:absolute;left:1057px;top:819px;width:1px;height:19px;background:#696969;"></div><div class="t" style="left:1062px;top:823px;font-size:11.5px;color:#000;font-weight:normal;letter-spacing:-0.45px">Prognostic Options</div><div style="position:absolute;left:1155px;top:819px;width:1px;height:19px;background:#fff;"></div><div style="position:absolute;left:1156px;top:819px;width:1px;height:19px;background:#a0a0a0;"></div><div style="position:absolute;left:1157px;top:819px;width:1px;height:19px;background:#696969;"></div><div class="t" style="left:1162px;top:823px;font-size:11.5px;color:#000;font-weight:normal;letter-spacing:-0.45px">Detection Options</div><div style="position:absolute;left:1252px;top:819px;width:1px;height:19px;background:#fff;"></div><div style="position:absolute;left:1253px;top:819px;width:1px;height:19px;background:#a0a0a0;"></div><div style="position:absolute;left:1254px;top:819px;width:1px;height:19px;background:#696969;"></div><div class="t" style="left:1259px;top:823px;font-size:11.5px;color:#000;font-weight:normal;letter-spacing:-0.45px">Isolation Options</div><div style="position:absolute;left:1342px;top:819px;width:1px;height:19px;background:#fff;"></div><div style="position:absolute;left:1343px;top:819px;width:1px;height:19px;background:#a0a0a0;"></div><div style="position:absolute;left:1344px;top:819px;width:1px;height:19px;background:#696969;"></div><div style="position:absolute;left:756px;top:840px;width:1148px;height:177px;background:#f0f0f0;box-sizing:border-box;border-top:1px solid #fff;border-left:1px solid #a0a0a0;border-right:1px solid #696969;border-bottom:1px solid #696969"></div><div style="position:absolute;left:769px;top:850px;width:296px;height:21px;background:#fff;box-sizing:border-box;border-top:1px solid #a0a0a0;border-left:1px solid #a0a0a0;border-right:1px solid #fff;border-bottom:1px solid #fff;box-shadow:inset 1px 1px 0 #696969;"></div><svg style="position:absolute;left:773px;top:853px;" width="16" height="16" viewBox="0 0 16 16"><circle cx="8" cy="8" r="7" fill="#1a3fd0"/><path d="M4 4 Q8 3 9 7 Q6 9 8 13 Q5 12 4 8 Z M10 3 Q13 5 12 9 L10 8 Z" fill="#20a020"/></svg><div class="t" style="left:792px;top:855px;font-size:12px;color:#000;font-weight:normal;letter-spacing:-0.3px">Custom Selection</div><div style="position:absolute;left:1045px;top:852px;width:18px;height:18px;background:#f0f0f0;box-sizing:border-box;border-top:1px solid #fff;border-left:1px solid #fff;border-right:1px solid #696969;border-bottom:1px solid #696969;box-shadow:inset -1px -1px 0 #a0a0a0;"></div><svg style="position:absolute;left:1045px;top:852px;" width="18" height="18" viewBox="0 0 18 18"><path d="M5.0 7.0 h8 l-4 4 z" fill="#000"/></svg><div style="position:absolute;left:1070px;top:849px;width:822px;height:154px;background:#fff;box-sizing:border-box;border-top:1px solid #a0a0a0;border-left:1px solid #a0a0a0;border-right:1px solid #fff;border-bottom:1px solid #fff"></div><div style="position:absolute;left:1071px;top:850px;width:1px;height:152px;background:#696969;"></div><div style="position:absolute;left:1071px;top:850px;width:820px;height:1px;background:#696969;"></div><div style="position:absolute;left:1875px;top:851px;width:16px;height:151px;background:#f0f0f0;"></div><div style="position:absolute;left:1875px;top:868px;width:16px;height:18px;background:#cdcdcd;"></div><svg style="position:absolute;left:1875px;top:852px;" width="16" height="16" viewBox="0 0 16 16"><path d="M4 10 L8 6 L12 10" stroke="#606060" stroke-width="1.6" fill="none"/></svg><svg style="position:absolute;left:1875px;top:985px;" width="16" height="16" viewBox="0 0 16 16"><path d="M4 6 L8 10 L12 6" stroke="#606060" stroke-width="1.6" fill="none"/></svg><svg style="position:absolute;left:1075px;top:856px;" width="16" height="14" viewBox="0 0 16 14"><rect x="0" y="1" width="15" height="10" fill="#0a5a0a" stroke="#000" stroke-width="0.6"/><rect x="1" y="2" width="6" height="8" fill="#1a8a1a"/><path d="M1 4 h5 M1 6 h5 M1 8 h5" stroke="#e0e0e0" stroke-width="0.7"/><rect x="9" y="2" width="5" height="8" fill="#2aa02a"/><path d="M10 4 h3 M10 7 h3" stroke="#000" stroke-width="0.7"/><rect x="7" y="10" width="3" height="4" fill="#e8e000" stroke="#000" stroke-width="0.5"/></svg><div class="t" style="left:1096px;top:857px;font-size:12px;color:#000;font-weight:normal;">ECU</div><svg style="position:absolute;left:1075px;top:877px;" width="17" height="14" viewBox="0 0 17 14"><path d="M1 3 L3 1 H7 L9 3 H14 V13 H1 Z" fill="#f4f0b0" stroke="#606060" stroke-width="0.7"/><path d="M1 13 L3 6 H16 L14 13 Z" fill="#e8e070" stroke="#000" stroke-width="0.8"/></svg><div class="t" style="left:1096px;top:878px;font-size:12px;color:#000;font-weight:normal;letter-spacing:-0.3px">LF Disc Assy</div><div style="position:absolute;left:1084px;top:891px;width:1px;height:9px;background:repeating-linear-gradient(180deg,#0000c0 0 1px,transparent 1px 2px)"></div><div style="position:absolute;left:1084px;top:900px;width:12px;height:1px;background:repeating-linear-gradient(90deg,#0000c0 0 1px,transparent 1px 2px)"></div><svg style="position:absolute;left:1096px;top:893px;" width="16" height="14" viewBox="0 0 16 14"><rect x="0" y="1" width="15" height="10" fill="#0a5a0a" stroke="#000" stroke-width="0.6"/><rect x="1" y="2" width="6" height="8" fill="#1a8a1a"/><path d="M1 4 h5 M1 6 h5 M1 8 h5" stroke="#e0e0e0" stroke-width="0.7"/><rect x="9" y="2" width="5" height="8" fill="#2aa02a"/><path d="M10 4 h3 M10 7 h3" stroke="#000" stroke-width="0.7"/><rect x="7" y="10" width="3" height="4" fill="#e8e000" stroke="#000" stroke-width="0.5"/></svg><div class="t" style="left:1116px;top:894px;font-size:12px;color:#000;font-weight:normal;letter-spacing:-0.3px">Components</div><svg style="position:absolute;left:1075px;top:913px;" width="17" height="14" viewBox="0 0 17 14"><path d="M1 3 L3 1 H7 L9 3 H14 V13 H1 Z" fill="#f4f0b0" stroke="#606060" stroke-width="0.7"/><path d="M1 13 L3 6 H16 L14 13 Z" fill="#e8e070" stroke="#000" stroke-width="0.8"/></svg><div class="t" style="left:1096px;top:914px;font-size:12px;color:#000;font-weight:normal;letter-spacing:-0.3px">LR Disc Assy</div><div style="position:absolute;left:1084px;top:927px;width:1px;height:9px;background:repeating-linear-gradient(180deg,#0000c0 0 1px,transparent 1px 2px)"></div><div style="position:absolute;left:1084px;top:936px;width:12px;height:1px;background:repeating-linear-gradient(90deg,#0000c0 0 1px,transparent 1px 2px)"></div><svg style="position:absolute;left:1096px;top:929px;" width="16" height="14" viewBox="0 0 16 14"><rect x="0" y="1" width="15" height="10" fill="#0a5a0a" stroke="#000" stroke-width="0.6"/><rect x="1" y="2" width="6" height="8" fill="#1a8a1a"/><path d="M1 4 h5 M1 6 h5 M1 8 h5" stroke="#e0e0e0" stroke-width="0.7"/><rect x="9" y="2" width="5" height="8" fill="#2aa02a"/><path d="M10 4 h3 M10 7 h3" stroke="#000" stroke-width="0.7"/><rect x="7" y="10" width="3" height="4" fill="#e8e000" stroke="#000" stroke-width="0.5"/></svg><div class="t" style="left:1116px;top:930px;font-size:12px;color:#000;font-weight:normal;letter-spacing:-0.3px">Components</div><svg style="position:absolute;left:1075px;top:949px;" width="17" height="14" viewBox="0 0 17 14"><path d="M1 3 L3 1 H7 L9 3 H14 V13 H1 Z" fill="#f4f0b0" stroke="#606060" stroke-width="0.7"/><path d="M1 13 L3 6 H16 L14 13 Z" fill="#e8e070" stroke="#000" stroke-width="0.8"/></svg><div class="t" style="left:1096px;top:950px;font-size:12px;color:#000;font-weight:normal;letter-spacing:-0.3px">RF Disc Assy</div><div style="position:absolute;left:1084px;top:963px;width:1px;height:9px;background:repeating-linear-gradient(180deg,#0000c0 0 1px,transparent 1px 2px)"></div><div style="position:absolute;left:1084px;top:972px;width:12px;height:1px;background:repeating-linear-gradient(90deg,#0000c0 0 1px,transparent 1px 2px)"></div><svg style="position:absolute;left:1096px;top:965px;" width="16" height="14" viewBox="0 0 16 14"><rect x="0" y="1" width="15" height="10" fill="#0a5a0a" stroke="#000" stroke-width="0.6"/><rect x="1" y="2" width="6" height="8" fill="#1a8a1a"/><path d="M1 4 h5 M1 6 h5 M1 8 h5" stroke="#e0e0e0" stroke-width="0.7"/><rect x="9" y="2" width="5" height="8" fill="#2aa02a"/><path d="M10 4 h3 M10 7 h3" stroke="#000" stroke-width="0.7"/><rect x="7" y="10" width="3" height="4" fill="#e8e000" stroke="#000" stroke-width="0.5"/></svg><div class="t" style="left:1116px;top:966px;font-size:12px;color:#000;font-weight:normal;letter-spacing:-0.3px">Components</div><svg style="position:absolute;left:1075px;top:985px;" width="17" height="14" viewBox="0 0 17 14"><path d="M1 3 L3 1 H7 L9 3 H14 V13 H1 Z" fill="#f4f0b0" stroke="#606060" stroke-width="0.7"/><path d="M1 13 L3 6 H16 L14 13 Z" fill="#e8e070" stroke="#000" stroke-width="0.8"/></svg><div class="t" style="left:1096px;top:986px;font-size:12px;color:#000;font-weight:normal;letter-spacing:-0.3px">RR Disc Assy</div><div style="position:absolute;left:1084px;top:999px;width:1px;height:3px;background:repeating-linear-gradient(180deg,#0000c0 0 1px,transparent 1px 2px)"></div><div style="position:absolute;left:1424px;top:904px;width:115px;height:35px;background:#f0f0f0;box-sizing:border-box;border-top:1px solid #fff;border-left:1px solid #fff;border-right:1px solid #696969;border-bottom:1px solid #696969"></div><div style="position:absolute;left:1427px;top:907px;width:109px;height:29px;background:#f0f0f0;box-sizing:border-box;border-top:1px solid #696969;border-left:1px solid #696969;border-right:1px solid #fff;border-bottom:1px solid #fff"></div><div class="t" style="left:1424px;top:915px;width:115px;text-align:center;font-size:12px;color:#000;letter-spacing:-0.3px">Analyzing Hierarchy</div><div style="position:absolute;left:473px;top:216px;width:392px;height:633px;box-sizing:border-box;border:1px solid #1883d7;background:#f0f0f0;box-shadow:0 0 14px 4px rgba(0,0,0,0.22)"></div><div style="position:absolute;left:474px;top:217px;width:390px;height:30px;background:#fff;"></div><svg style="position:absolute;left:485px;top:222px;" width="13" height="17" viewBox="0 0 13 17"><rect x="0.5" y="2" width="12" height="13" rx="2" fill="#f00000" stroke="#800000" stroke-width="1"/><rect x="1" y="1" width="11" height="3" rx="1.5" fill="#800000"/><path d="M-1 9 H8 M5 6 L8 9 L5 12" stroke="#ff0" stroke-width="1.6" fill="none"/></svg><div class="t" style="left:503px;top:226px;font-size:12px;color:#000;font-weight:normal;">DiagML Options</div><svg style="position:absolute;left:842px;top:224px;" width="14" height="14" viewBox="0 0 14 14"><path d="M1 1 L13 13 M13 1 L1 13" stroke="#000" stroke-width="1.1"/></svg><div style="position:absolute;left:486px;top:340px;width:367px;height:437px;background:#fff;box-sizing:border-box;border-top:1px solid #a0a0a0;border-left:1px solid #a0a0a0;border-right:1px solid #fff;border-bottom:1px solid #fff"></div><div style="position:absolute;left:487px;top:341px;width:1px;height:435px;background:#696969;"></div><div style="position:absolute;left:836px;top:341px;width:16px;height:435px;background:#f0f0f0;"></div><div style="position:absolute;left:836px;top:359px;width:16px;height:8px;background:#cdcdcd;"></div><svg style="position:absolute;left:836px;top:760px;" width="16" height="16" viewBox="0 0 16 16"><path d="M4 6 L8 10 L12 6" stroke="#606060" stroke-width="1.6" fill="none"/></svg><div style="position:absolute;left:488px;top:341px;width:348px;height:435px;overflow:hidden"><div style="position:absolute;left:11px;top:4px;width:1px;height:430px;background:repeating-linear-gradient(180deg,#0000c0 0 1px,transparent 1px 2px)"></div><div style="position:absolute;left:31px;top:42px;width:1px;height:169px;background:repeating-linear-gradient(180deg,#0000c0 0 1px,transparent 1px 2px)"></div><div style="position:absolute;left:51px;top:138px;width:1px;height:57px;background:repeating-linear-gradient(180deg,#0000c0 0 1px,transparent 1px 2px)"></div><div style="position:absolute;left:31px;top:234px;width:1px;height:57px;background:repeating-linear-gradient(180deg,#0000c0 0 1px,transparent 1px 2px)"></div><div style="position:absolute;left:31px;top:330px;width:1px;height:57px;background:repeating-linear-gradient(180deg,#0000c0 0 1px,transparent 1px 2px)"></div><div style="position:absolute;left:31px;top:410px;width:1px;height:30px;background:repeating-linear-gradient(180deg,#0000c0 0 1px,transparent 1px 2px)"></div><div style="position:absolute;left:11px;top:19px;width:13px;height:1px;background:repeating-linear-gradient(90deg,#0000c0 0 1px,transparent 1px 2px)"></div><div style="position:absolute;left:25px;top:12px;width:14px;height:14px;box-sizing:border-box;border:1px solid #7a7a7a;background:#fff"></div><svg style="position:absolute;left:25px;top:10px;" width="15" height="16" viewBox="0 0 15 16"><path d="M2.5 9 L5.5 13 L13 2" fill="none" stroke="#0000a0" stroke-width="1.8"/></svg><div class="t" style="left:43px;top:14px;font-size:11.5px;color:#000;font-weight:normal;letter-spacing:-0.45px">Design Color Labels</div><div style="position:absolute;left:11px;top:35px;width:13px;height:1px;background:repeating-linear-gradient(90deg,#0000c0 0 1px,transparent 1px 2px)"></div><div style="position:absolute;left:7px;top:31px;width:9px;height:9px;box-sizing:border-box;border:1px solid #000;background:#fff"></div><div style="position:absolute;left:9px;top:35px;width:5px;height:1px;background:#000;"></div><div style="position:absolute;left:25px;top:28px;width:14px;height:14px;box-sizing:border-box;border:1px solid #7a7a7a;background:#fff"></div><svg style="position:absolute;left:25px;top:26px;" width="15" height="16" viewBox="0 0 15 16"><path d="M2.5 9 L5.5 13 L13 2" fill="none" stroke="#0000a0" stroke-width="1.8"/></svg><div class="t" style="left:43px;top:30px;font-size:11.5px;color:#000;font-weight:normal;letter-spacing:-0.45px">Items</div><div style="position:absolute;left:31px;top:51px;width:13px;height:1px;background:repeating-linear-gradient(90deg,#0000c0 0 1px,transparent 1px 2px)"></div><div style="position:absolute;left:45px;top:44px;width:14px;height:14px;box-sizing:border-box;border:1px solid #7a7a7a;background:#fff"></div><svg style="position:absolute;left:45px;top:42px;" width="15" height="16" viewBox="0 0 15 16"><path d="M2.5 9 L5.5 13 L13 2" fill="none" stroke="#e00000" stroke-width="1.8"/></svg><div class="t" style="left:63px;top:46px;font-size:11.5px;color:#000;font-weight:normal;letter-spacing:-0.45px">Hierarchical Context (in Context field)</div><div style="position:absolute;left:31px;top:67px;width:13px;height:1px;background:repeating-linear-gradient(90deg,#0000c0 0 1px,transparent 1px 2px)"></div><div style="position:absolute;left:45px;top:60px;width:14px;height:14px;box-sizing:border-box;border:1px solid #7a7a7a;background:#fff"></div><svg style="position:absolute;left:45px;top:58px;" width="15" height="16" viewBox="0 0 15 16"><path d="M2.5 9 L5.5 13 L13 2" fill="none" stroke="#0000a0" stroke-width="1.8"/></svg><div class="t" style="left:63px;top:62px;font-size:11.5px;color:#000;font-weight:normal;letter-spacing:-0.45px">Description</div><div style="position:absolute;left:31px;top:83px;width:13px;height:1px;background:repeating-linear-gradient(90deg,#0000c0 0 1px,transparent 1px 2px)"></div><div style="position:absolute;left:45px;top:76px;width:14px;height:14px;box-sizing:border-box;border:1px solid #7a7a7a;background:#fff"></div><svg style="position:absolute;left:45px;top:74px;" width="15" height="16" viewBox="0 0 15 16"><path d="M2.5 9 L5.5 13 L13 2" fill="none" stroke="#0000a0" stroke-width="1.8"/></svg><div class="t" style="left:63px;top:78px;font-size:11.5px;color:#000;font-weight:normal;letter-spacing:-0.45px">Ports</div><div style="position:absolute;left:31px;top:99px;width:13px;height:1px;background:repeating-linear-gradient(90deg,#0000c0 0 1px,transparent 1px 2px)"></div><div style="position:absolute;left:45px;top:92px;width:14px;height:14px;box-sizing:border-box;border:1px solid #7a7a7a;background:#fff"></div><svg style="position:absolute;left:45px;top:90px;" width="15" height="16" viewBox="0 0 15 16"><path d="M2.5 9 L5.5 13 L13 2" fill="none" stroke="#0000a0" stroke-width="1.8"/></svg><div class="t" style="left:63px;top:94px;font-size:11.5px;color:#000;font-weight:normal;letter-spacing:-0.45px">Appearance</div><div style="position:absolute;left:31px;top:115px;width:13px;height:1px;background:repeating-linear-gradient(90deg,#0000c0 0 1px,transparent 1px 2px)"></div><div style="position:absolute;left:45px;top:108px;width:14px;height:14px;box-sizing:border-box;border:1px solid #7a7a7a;background:#fff"></div><svg style="position:absolute;left:45px;top:106px;" width="15" height="16" viewBox="0 0 15 16"><path d="M2.5 9 L5.5 13 L13 2" fill="none" stroke="#0000a0" stroke-width="1.8"/></svg><div class="t" style="left:63px;top:110px;font-size:11.5px;color:#000;font-weight:normal;letter-spacing:-0.45px">F/FMs per Object on Multi-Object Items</div><div style="position:absolute;left:31px;top:131px;width:13px;height:1px;background:repeating-linear-gradient(90deg,#0000c0 0 1px,transparent 1px 2px)"></div><div style="position:absolute;left:27px;top:127px;width:9px;height:9px;box-sizing:border-box;border:1px solid #000;background:#fff"></div><div style="position:absolute;left:29px;top:131px;width:5px;height:1px;background:#000;"></div><div style="position:absolute;left:45px;top:124px;width:14px;height:14px;box-sizing:border-box;border:1px solid #7a7a7a;background:#fff"></div><svg style="position:absolute;left:45px;top:122px;" width="15" height="16" viewBox="0 0 15 16"><path d="M2.5 9 L5.5 13 L13 2" fill="none" stroke="#0000a0" stroke-width="1.8"/></svg><div class="t" style="left:63px;top:126px;font-size:11.5px;color:#000;font-weight:normal;letter-spacing:-0.45px">Attributes</div><div style="position:absolute;left:51px;top:147px;width:13px;height:1px;background:repeating-linear-gradient(90deg,#0000c0 0 1px,transparent 1px 2px)"></div><div style="position:absolute;left:65px;top:140px;width:14px;height:14px;box-sizing:border-box;border:1px solid #7a7a7a;background:#fff"></div><div class="t" style="left:83px;top:142px;font-size:11.5px;color:#000;font-weight:normal;letter-spacing:-0.45px">Cost</div><div style="position:absolute;left:51px;top:163px;width:13px;height:1px;background:repeating-linear-gradient(90deg,#0000c0 0 1px,transparent 1px 2px)"></div><div style="position:absolute;left:65px;top:156px;width:14px;height:14px;box-sizing:border-box;border:1px solid #7a7a7a;background:#fff"></div><svg style="position:absolute;left:65px;top:154px;" width="15" height="16" viewBox="0 0 15 16"><path d="M2.5 9 L5.5 13 L13 2" fill="none" stroke="#0000a0" stroke-width="1.8"/></svg><div class="t" style="left:83px;top:158px;font-size:11.5px;color:#000;font-weight:normal;letter-spacing:-0.45px">LCN</div><div style="position:absolute;left:51px;top:179px;width:13px;height:1px;background:repeating-linear-gradient(90deg,#0000c0 0 1px,transparent 1px 2px)"></div><div style="position:absolute;left:65px;top:172px;width:14px;height:14px;box-sizing:border-box;border:1px solid #7a7a7a;background:#fff"></div><svg style="position:absolute;left:65px;top:170px;" width="15" height="16" viewBox="0 0 15 16"><path d="M2.5 9 L5.5 13 L13 2" fill="none" stroke="#0000a0" stroke-width="1.8"/></svg><div style="position:absolute;left:82px;top:171px;width:62px;height:15px;background:#000080;"></div><div class="t" style="left:83px;top:174px;font-size:11.5px;color:#fff;font-weight:normal;letter-spacing:-0.45px">Part Number</div><div style="position:absolute;left:51px;top:195px;width:13px;height:1px;background:repeating-linear-gradient(90deg,#0000c0 0 1px,transparent 1px 2px)"></div><div style="position:absolute;left:65px;top:188px;width:14px;height:14px;box-sizing:border-box;border:1px solid #7a7a7a;background:#fff"></div><div class="t" style="left:83px;top:190px;font-size:11.5px;color:#000;font-weight:normal;letter-spacing:-0.45px">Time</div><div style="position:absolute;left:31px;top:211px;width:13px;height:1px;background:repeating-linear-gradient(90deg,#0000c0 0 1px,transparent 1px 2px)"></div><div style="position:absolute;left:45px;top:204px;width:14px;height:14px;box-sizing:border-box;border:1px solid #7a7a7a;background:#fff"></div><svg style="position:absolute;left:45px;top:202px;" width="15" height="16" viewBox="0 0 15 16"><path d="M2.5 9 L5.5 13 L13 2" fill="none" stroke="#0000a0" stroke-width="1.8"/></svg><div class="t" style="left:63px;top:206px;font-size:11.5px;color:#000;font-weight:normal;letter-spacing:-0.45px">Relative Failure Probability</div><div style="position:absolute;left:11px;top:227px;width:13px;height:1px;background:repeating-linear-gradient(90deg,#0000c0 0 1px,transparent 1px 2px)"></div><div style="position:absolute;left:7px;top:223px;width:9px;height:9px;box-sizing:border-box;border:1px solid #000;background:#fff"></div><div style="position:absolute;left:9px;top:227px;width:5px;height:1px;background:#000;"></div><div style="position:absolute;left:25px;top:220px;width:14px;height:14px;box-sizing:border-box;border:1px solid #7a7a7a;background:#fff"></div><svg style="position:absolute;left:25px;top:218px;" width="15" height="16" viewBox="0 0 15 16"><path d="M2.5 9 L5.5 13 L13 2" fill="none" stroke="#e00000" stroke-width="1.8"/></svg><div class="t" style="left:43px;top:222px;font-size:11.5px;color:#000;font-weight:normal;letter-spacing:-0.45px">I/O Objects (all)</div><div style="position:absolute;left:31px;top:243px;width:13px;height:1px;background:repeating-linear-gradient(90deg,#0000c0 0 1px,transparent 1px 2px)"></div><div style="position:absolute;left:45px;top:236px;width:14px;height:14px;box-sizing:border-box;border:1px solid #7a7a7a;background:#fff"></div><svg style="position:absolute;left:45px;top:234px;" width="15" height="16" viewBox="0 0 15 16"><path d="M2.5 9 L5.5 13 L13 2" fill="none" stroke="#e00000" stroke-width="1.8"/></svg><div class="t" style="left:63px;top:238px;font-size:11.5px;color:#000;font-weight:normal;letter-spacing:-0.45px">Hierarchical Context (in Context field)</div><div style="position:absolute;left:31px;top:259px;width:13px;height:1px;background:repeating-linear-gradient(90deg,#0000c0 0 1px,transparent 1px 2px)"></div><div style="position:absolute;left:45px;top:252px;width:14px;height:14px;box-sizing:border-box;border:1px solid #7a7a7a;background:#fff"></div><svg style="position:absolute;left:45px;top:250px;" width="15" height="16" viewBox="0 0 15 16"><path d="M2.5 9 L5.5 13 L13 2" fill="none" stroke="#0000a0" stroke-width="1.8"/></svg><div class="t" style="left:63px;top:254px;font-size:11.5px;color:#000;font-weight:normal;letter-spacing:-0.45px">Description</div><div style="position:absolute;left:31px;top:275px;width:13px;height:1px;background:repeating-linear-gradient(90deg,#0000c0 0 1px,transparent 1px 2px)"></div><div style="position:absolute;left:45px;top:268px;width:14px;height:14px;box-sizing:border-box;border:1px solid #7a7a7a;background:#fff"></div><svg style="position:absolute;left:45px;top:266px;" width="15" height="16" viewBox="0 0 15 16"><path d="M2.5 9 L5.5 13 L13 2" fill="none" stroke="#0000a0" stroke-width="1.8"/></svg><div class="t" style="left:63px;top:270px;font-size:11.5px;color:#000;font-weight:normal;letter-spacing:-0.45px">Ports</div><div style="position:absolute;left:31px;top:291px;width:13px;height:1px;background:repeating-linear-gradient(90deg,#0000c0 0 1px,transparent 1px 2px)"></div><div style="position:absolute;left:45px;top:284px;width:14px;height:14px;box-sizing:border-box;border:1px solid #7a7a7a;background:#fff"></div><svg style="position:absolute;left:45px;top:282px;" width="15" height="16" viewBox="0 0 15 16"><path d="M2.5 9 L5.5 13 L13 2" fill="none" stroke="#0000a0" stroke-width="1.8"/></svg><div class="t" style="left:63px;top:286px;font-size:11.5px;color:#000;font-weight:normal;letter-spacing:-0.45px">Appearance</div><div style="position:absolute;left:11px;top:307px;width:13px;height:1px;background:repeating-linear-gradient(90deg,#0000c0 0 1px,transparent 1px 2px)"></div><div style="position:absolute;left:25px;top:300px;width:14px;height:14px;box-sizing:border-box;border:1px solid #7a7a7a;background:#fff"></div><svg style="position:absolute;left:25px;top:298px;" width="15" height="16" viewBox="0 0 15 16"><path d="M2.5 9 L5.5 13 L13 2" fill="none" stroke="#0000a0" stroke-width="1.8"/></svg><div class="t" style="left:43px;top:302px;font-size:11.5px;color:#000;font-weight:normal;letter-spacing:-0.45px">Annotations</div><div style="position:absolute;left:11px;top:323px;width:13px;height:1px;background:repeating-linear-gradient(90deg,#0000c0 0 1px,transparent 1px 2px)"></div><div style="position:absolute;left:7px;top:319px;width:9px;height:9px;box-sizing:border-box;border:1px solid #000;background:#fff"></div><div style="position:absolute;left:9px;top:323px;width:5px;height:1px;background:#000;"></div><div style="position:absolute;left:25px;top:316px;width:14px;height:14px;box-sizing:border-box;border:1px solid #7a7a7a;background:#fff"></div><svg style="position:absolute;left:25px;top:314px;" width="15" height="16" viewBox="0 0 15 16"><path d="M2.5 9 L5.5 13 L13 2" fill="none" stroke="#909090" stroke-width="1.8"/></svg><div class="t" style="left:43px;top:318px;font-size:11.5px;color:#000;font-weight:normal;letter-spacing:-0.45px">Functions</div><div style="position:absolute;left:31px;top:339px;width:13px;height:1px;background:repeating-linear-gradient(90deg,#0000c0 0 1px,transparent 1px 2px)"></div><div style="position:absolute;left:45px;top:332px;width:14px;height:14px;box-sizing:border-box;border:1px solid #7a7a7a;background:#fff"></div><div class="t" style="left:63px;top:334px;font-size:11.5px;color:#000;font-weight:normal;letter-spacing:-0.45px">Hierarchical Context (in Name field)</div><div style="position:absolute;left:31px;top:355px;width:13px;height:1px;background:repeating-linear-gradient(90deg,#0000c0 0 1px,transparent 1px 2px)"></div><div style="position:absolute;left:45px;top:348px;width:14px;height:14px;box-sizing:border-box;border:1px solid #7a7a7a;background:#fff"></div><div class="t" style="left:63px;top:350px;font-size:11.5px;color:#000;font-weight:normal;letter-spacing:-0.45px">Attributes</div><div style="position:absolute;left:31px;top:371px;width:13px;height:1px;background:repeating-linear-gradient(90deg,#0000c0 0 1px,transparent 1px 2px)"></div><div style="position:absolute;left:45px;top:364px;width:14px;height:14px;box-sizing:border-box;border:1px solid #7a7a7a;background:#fff"></div><div class="t" style="left:63px;top:366px;font-size:11.5px;color:#000;font-weight:normal;letter-spacing:-0.45px">Relative Failure Probability</div><div style="position:absolute;left:31px;top:387px;width:13px;height:1px;background:repeating-linear-gradient(90deg,#0000c0 0 1px,transparent 1px 2px)"></div><div style="position:absolute;left:45px;top:380px;width:14px;height:14px;box-sizing:border-box;border:1px solid #7a7a7a;background:#fff"></div><div class="t" style="left:63px;top:382px;font-size:11.5px;color:#000;font-weight:normal;letter-spacing:-0.45px">Dependencies</div><div style="position:absolute;left:11px;top:403px;width:13px;height:1px;background:repeating-linear-gradient(90deg,#0000c0 0 1px,transparent 1px 2px)"></div><div style="position:absolute;left:7px;top:399px;width:9px;height:9px;box-sizing:border-box;border:1px solid #000;background:#fff"></div><div style="position:absolute;left:9px;top:403px;width:5px;height:1px;background:#000;"></div><div style="position:absolute;left:25px;top:396px;width:14px;height:14px;box-sizing:border-box;border:1px solid #7a7a7a;background:#fff"></div><svg style="position:absolute;left:25px;top:394px;" width="15" height="16" viewBox="0 0 15 16"><path d="M2.5 9 L5.5 13 L13 2" fill="none" stroke="#0000a0" stroke-width="1.8"/></svg><div class="t" style="left:43px;top:398px;font-size:11.5px;color:#000;font-weight:normal;letter-spacing:-0.45px">Failure Modes</div><div style="position:absolute;left:31px;top:419px;width:13px;height:1px;background:repeating-linear-gradient(90deg,#0000c0 0 1px,transparent 1px 2px)"></div><div style="position:absolute;left:45px;top:412px;width:14px;height:14px;box-sizing:border-box;border:1px solid #7a7a7a;background:#fff"></div><div class="t" style="left:63px;top:414px;font-size:11.5px;color:#000;font-weight:normal;letter-spacing:-0.45px">Hierarchical Context (in Name field)</div><div style="position:absolute;left:31px;top:435px;width:13px;height:1px;background:repeating-linear-gradient(90deg,#0000c0 0 1px,transparent 1px 2px)"></div><div style="position:absolute;left:27px;top:431px;width:9px;height:9px;box-sizing:border-box;border:1px solid #000;background:#fff"></div><div style="position:absolute;left:29px;top:435px;width:5px;height:1px;background:#000;"></div><div style="position:absolute;left:31px;top:433px;width:1px;height:5px;background:#000;"></div><div style="position:absolute;left:45px;top:428px;width:14px;height:14px;box-sizing:border-box;border:1px solid #7a7a7a;background:#fff"></div><div class="t" style="left:63px;top:430px;font-size:11.5px;color:#000;font-weight:normal;letter-spacing:-0.45px">Attributes</div></div><div style="position:absolute;left:485px;top:258px;width:368px;height:21px;background:#fff;box-sizing:border-box;border-top:1px solid #a0a0a0;border-left:1px solid #a0a0a0;border-right:1px solid #fff;border-bottom:1px solid #fff;box-shadow:inset 1px 1px 0 #696969;"></div><div class="t" style="left:489px;top:263px;font-size:11.5px;color:#000;font-weight:normal;letter-spacing:-0.45px">Export DiagML for DSI Workbench</div><div style="position:absolute;left:835px;top:260px;width:16px;height:17px;background:#f0f0f0;box-sizing:border-box;border-top:1px solid #fff;border-left:1px solid #fff;border-right:1px solid #696969;border-bottom:1px solid #696969;box-shadow:inset -1px -1px 0 #a0a0a0;"></div><svg style="position:absolute;left:835px;top:260px;" width="16" height="17" viewBox="0 0 16 17"><path d="M4.0 6.5 h8 l-4 4 z" fill="#000"/></svg><div style="position:absolute;left:486px;top:279px;width:368px;height:80px;background:#fff;box-sizing:border-box;border:1px solid #646464"></div><div class="t" style="left:488px;top:282px;font-size:11.5px;color:#000;font-weight:normal;letter-spacing:-0.45px">Export DiagML for Static Reasoning</div><div class="t" style="left:488px;top:295px;font-size:11.5px;color:#000;font-weight:normal;letter-spacing:-0.45px">Export DiagML for Dynamic Reasoning</div><div class="t" style="left:488px;top:308px;font-size:11.5px;color:#000;font-weight:normal;letter-spacing:-0.45px">Export DiagML for Static or Dynamic Reasoning</div><div class="t" style="left:488px;top:321px;font-size:11.5px;color:#000;font-weight:normal;letter-spacing:-0.45px">Export DiagML for the eXpress Design Viewer</div><div style="position:absolute;left:487px;top:332.5px;width:366px;height:13px;background:#3399ff;"></div><div class="t" style="left:488px;top:334px;font-size:11.5px;color:#fff;font-weight:normal;letter-spacing:-0.45px">Export DiagML for DSI Workbench</div><div class="t" style="left:488px;top:347px;font-size:11.5px;color:#000;font-weight:normal;letter-spacing:-0.45px">Export DiagML for STAGE</div><div class="t" style="left:485px;top:790px;font-size:11.5px;color:#000;font-weight:normal;letter-spacing:-0.45px">XML Encoding:</div><div style="position:absolute;left:561px;top:785px;width:292px;height:21px;background:#fff;box-sizing:border-box;border-top:1px solid #a0a0a0;border-left:1px solid #a0a0a0;border-right:1px solid #fff;border-bottom:1px solid #fff;box-shadow:inset 1px 1px 0 #696969;"></div><div class="t" style="left:565px;top:790px;font-size:11.5px;color:#000;font-weight:normal;letter-spacing:-0.45px">--Encoding scheme not specified--</div><div style="position:absolute;left:835px;top:787px;width:16px;height:17px;background:#f0f0f0;box-sizing:border-box;border-top:1px solid #fff;border-left:1px solid #fff;border-right:1px solid #696969;border-bottom:1px solid #696969;box-shadow:inset -1px -1px 0 #a0a0a0;"></div><svg style="position:absolute;left:835px;top:787px;" width="16" height="17" viewBox="0 0 16 17"><path d="M4.0 6.5 h8 l-4 4 z" fill="#000"/></svg><div style="position:absolute;left:590px;top:813px;width:75px;height:24px;background:#f0f0f0;box-sizing:border-box;border-top:1px solid #fff;border-left:1px solid #fff;border-right:1px solid #404040;border-bottom:1px solid #404040;box-shadow:inset -1px -1px 0 #a0a0a0,0 0 0 1px #000"></div><div class="t" style="left:590px;top:819px;width:75px;text-align:center;font-size:12px;color:#000">OK</div><div style="position:absolute;left:671px;top:813px;width:75px;height:24px;background:#f0f0f0;box-sizing:border-box;border-top:1px solid #fff;border-left:1px solid #fff;border-right:1px solid #696969;border-bottom:1px solid #696969;box-shadow:inset -1px -1px 0 #a0a0a0;"></div><div class="t" style="left:671px;top:819px;width:75px;text-align:center;font-size:12px;color:#000">Cancel</div><div style="position:absolute;left:831px;top:813px;width:24px;height:24px;background:#f0f0f0;box-sizing:border-box;border-top:1px solid #fff;border-left:1px solid #fff;border-right:1px solid #696969;border-bottom:1px solid #696969;box-shadow:inset -1px -1px 0 #a0a0a0;"></div><svg style="position:absolute;left:834px;top:816px;" width="18" height="18" viewBox="0 0 18 18"><g transform="translate(9,9)"><circle r="5" fill="none" stroke="#888" stroke-width="2.8"/><circle r="1.5" fill="#888"/><rect x="-1.5" y="-8" width="3" height="3.5" fill="#888" transform="rotate(0)"/><rect x="-1.5" y="-8" width="3" height="3.5" fill="#888" transform="rotate(45)"/><rect x="-1.5" y="-8" width="3" height="3.5" fill="#888" transform="rotate(90)"/><rect x="-1.5" y="-8" width="3" height="3.5" fill="#888" transform="rotate(135)"/><rect x="-1.5" y="-8" width="3" height="3.5" fill="#888" transform="rotate(180)"/><rect x="-1.5" y="-8" width="3" height="3.5" fill="#888" transform="rotate(225)"/><rect x="-1.5" y="-8" width="3" height="3.5" fill="#888" transform="rotate(270)"/><rect x="-1.5" y="-8" width="3" height="3.5" fill="#888" transform="rotate(315)"/></g></svg>
</body></html>
